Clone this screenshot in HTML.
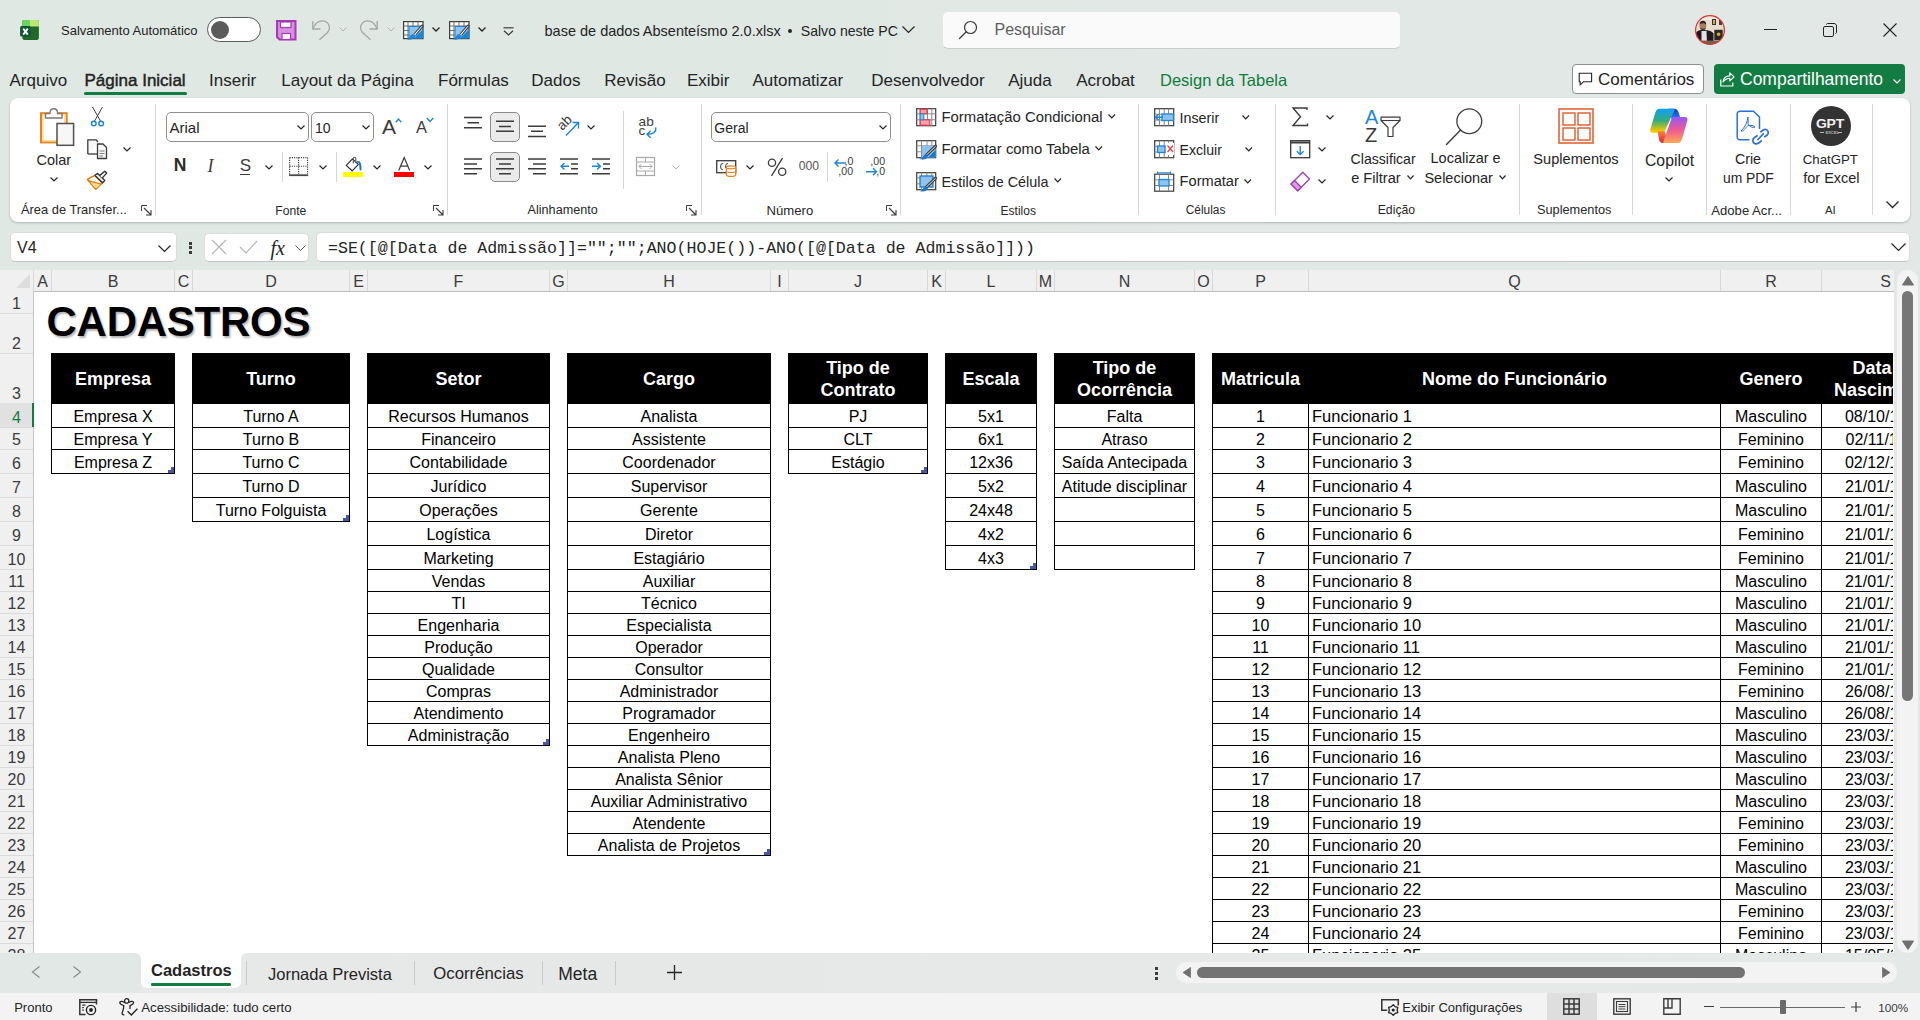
<!DOCTYPE html><html><head><meta charset="utf-8"><style>
html,body{margin:0;padding:0;width:1920px;height:1020px;overflow:hidden;background:linear-gradient(to right,#dfe8e3 0%,#e0e8e4 45%,#e3e8e7 100%);font-family:"Liberation Sans",sans-serif;}
.t{position:absolute;white-space:nowrap;line-height:1;}
svg{overflow:visible}
</style></head><body>
<svg style="position:absolute;left:20px;top:20px;" width="20" height="20" viewBox="0 0 20 20">
<rect x="2.3" y="0" width="16.6" height="19.9" rx="1.8" fill="#21692b"/>
<path d="M4.1 0 H10 V6.5 H2.3 V1.8 A1.8 1.8 0 0 1 4.1 0 Z" fill="#6dd35f"/>
<path d="M10 0 H17.1 A1.8 1.8 0 0 1 18.9 1.8 V6.5 H10 Z" fill="#bce872"/>
<rect x="0.1" y="5.9" width="10.5" height="10.7" rx="1.5" fill="#0f5533"/>
<path d="M3.2 8.6 L7.8 14.6 M7.8 8.6 L3.2 14.6" stroke="#fff" stroke-width="1.9"/>
</svg>
<div class="t" style="left:61px;top:24.00px;font-size:13px;color:#242424;font-weight:400;font-family:'Liberation Sans', sans-serif;">Salvamento Automático</div>
<div style="position:absolute;left:207px;top:17px;width:54px;height:25px;box-sizing:border-box;border:1px solid #5a5a5a;border-radius:13px;background:#fff"></div>
<div style="position:absolute;left:211px;top:21px;width:18px;height:18px;border-radius:50%;background:#5b5b5b"></div>
<svg style="position:absolute;left:276px;top:19.5px;" width="21" height="21" viewBox="0 0 21 21">
<path d="M1 1 H19.5 V19.5 H3.5 L1 17 Z" fill="#d590de" stroke="#a938b6" stroke-width="2" stroke-linejoin="miter"/>
<rect x="4.5" y="2" width="10.5" height="5.5" fill="#fff" stroke="#a938b6" stroke-width="1.2"/>
<rect x="6" y="13.5" width="8.5" height="6" fill="#fff" stroke="#a938b6" stroke-width="1.2"/>
</svg>
<svg style="position:absolute;left:311px;top:20px;" width="20" height="21" viewBox="0 0 20 21"><path d="M1.8 1 V9 H9.5" fill="none" stroke="#a6a6a6" stroke-width="1.3"/><path d="M2.2 8.6 C4 3.5 7.5 0.8 11.5 0.8 C15.5 0.8 18.5 4 18.5 7.8 C18.5 9.8 17.5 11.2 16.5 12.5 L8.5 19.8" fill="none" stroke="#a6a6a6" stroke-width="1.3"/></svg>
<svg style="position:absolute;left:338.5px;top:27px;" width="8" height="5" viewBox="0 0 8 5"><path d="M0.5 0.5 L4 4 L7.5 0.5" fill="none" stroke="#b5b5b5" stroke-width="1"/></svg>
<svg style="position:absolute;left:359px;top:20px;" width="20" height="21" viewBox="0 0 20 21"><path d="M18.2 1 V9 H10.5" fill="none" stroke="#a6a6a6" stroke-width="1.3"/><path d="M17.8 8.6 C16 3.5 12.5 0.8 8.5 0.8 C4.5 0.8 1.5 4 1.5 7.8 C1.5 9.8 2.5 11.2 3.5 12.5 L11.5 19.8" fill="none" stroke="#a6a6a6" stroke-width="1.3"/></svg>
<svg style="position:absolute;left:386.5px;top:27px;" width="8" height="5" viewBox="0 0 8 5"><path d="M0.5 0.5 L4 4 L7.5 0.5" fill="none" stroke="#b5b5b5" stroke-width="1"/></svg>
<svg style="position:absolute;left:403px;top:21px;" width="21" height="19" viewBox="0 0 21 19">
<rect x="0.6" y="0.6" width="19.4" height="17" fill="#fff" stroke="#3b3b3b" stroke-width="1.2"/>
<path d="M0.6 5 H20 M0.6 9.5 H6.5 M0.6 14 H6.5 M5 0.6 V17.6 M10 0.6 V5 M15 0.6 V5" stroke="#6b6b6b" stroke-width="1"/>
<rect x="6" y="5.5" width="13.5" height="11.6" fill="#8ec3f0"/>
<path d="M19.5 9 V17.1 H11 Z" fill="#1e86d6"/>
<path d="M6 5.5 H19.5 V17.1 H6 Z" fill="none" stroke="#1e86d6" stroke-width="1"/>
<path d="M11 13 L18.5 4.5 C19.3 3.7 20.6 4.8 19.8 5.7 L12.5 14.5" fill="#fff" stroke="#3b3b3b" stroke-width="1.1"/>
<path d="M4 18.5 C5.5 18.5 6.5 15.5 8.5 13.5 C10 12.2 12.5 13.5 12 15.5 C11 18.5 7 19 4 18.5 Z" fill="#1e86d6"/>
</svg>
<svg style="position:absolute;left:431.5px;top:27px;" width="8" height="5" viewBox="0 0 8 5"><path d="M0.5 0.5 L4 4 L7.5 0.5" fill="none" stroke="#242424" stroke-width="1.3"/></svg>
<svg style="position:absolute;left:449px;top:21px;" width="21" height="19" viewBox="0 0 21 19">
<rect x="0.6" y="0.6" width="19.4" height="17" fill="#fff" stroke="#3b3b3b" stroke-width="1.2"/>
<path d="M0.6 5 H20 M0.6 9.5 H6.5 M0.6 14 H6.5 M5 0.6 V17.6 M10 0.6 V5 M15 0.6 V5" stroke="#6b6b6b" stroke-width="1"/>
<rect x="6" y="5.5" width="13.5" height="11.6" fill="#8ec3f0"/>
<path d="M19.5 9 V17.1 H11 Z" fill="#1e86d6"/>
<path d="M6 5.5 H19.5 V17.1 H6 Z" fill="none" stroke="#1e86d6" stroke-width="1"/>
<path d="M11 13 L18.5 4.5 C19.3 3.7 20.6 4.8 19.8 5.7 L12.5 14.5" fill="#fff" stroke="#3b3b3b" stroke-width="1.1"/>
<path d="M4 18.5 C5.5 18.5 6.5 15.5 8.5 13.5 C10 12.2 12.5 13.5 12 15.5 C11 18.5 7 19 4 18.5 Z" fill="#1e86d6"/>
</svg>
<svg style="position:absolute;left:477.5px;top:27px;" width="8" height="5" viewBox="0 0 8 5"><path d="M0.5 0.5 L4 4 L7.5 0.5" fill="none" stroke="#242424" stroke-width="1.3"/></svg>
<svg style="position:absolute;left:503px;top:26.5px;" width="11" height="9" viewBox="0 0 11 9"><path d="M0.5 0.8 H10.5" stroke="#3b3b3b" stroke-width="1.2"/><path d="M1 3.8 L5.5 8 L10 3.8" fill="none" stroke="#3b3b3b" stroke-width="1.2"/></svg>
<div class="t" style="left:544.5px;top:23.73px;font-size:14.5px;color:#242424;font-weight:400;font-family:'Liberation Sans', sans-serif;">base de dados Absenteísmo 2.0.xlsx</div>
<div style="position:absolute;left:787.5px;top:28.5px;width:4px;height:4px;background:#242424;border-radius:50%"></div>
<div class="t" style="left:800.75px;top:24.06px;font-size:14.1px;color:#242424;font-weight:400;font-family:'Liberation Sans', sans-serif;">Salvo neste PC</div>
<svg style="position:absolute;left:902px;top:26px;" width="13" height="8" viewBox="0 0 13 8"><path d="M0.5 0.5 L6.5 6.5 L12.5 0.5" fill="none" stroke="#242424" stroke-width="1.2"/></svg>
<div style="position:absolute;left:942px;top:11px;width:459px;height:38px;box-sizing:border-box;background:#fafafa;border:1px solid #e3e6e4;border-bottom:1px solid #c9cccb;border-radius:6px"></div>
<svg style="position:absolute;left:958px;top:20px;" width="20" height="20" viewBox="0 0 20 20"><circle cx="12.5" cy="7.5" r="6" fill="none" stroke="#3b3b3b" stroke-width="1.2"/><path d="M8.3 11.7 L1.5 18.5" stroke="#3b3b3b" stroke-width="1.3" stroke-linecap="round"/></svg>
<div class="t" style="left:994.5px;top:21.96px;font-size:16px;color:#5f5f5f;font-weight:400;font-family:'Liberation Sans', sans-serif;">Pesquisar</div>
<svg style="position:absolute;left:1695px;top:15px;" width="30" height="30" viewBox="0 0 30 30">
<defs><clipPath id="avc"><circle cx="15" cy="15" r="14.6"/></clipPath></defs>
<g clip-path="url(#avc)">
<rect x="0" y="0" width="30" height="30" fill="#e6ddd0"/>
<rect x="0" y="0" width="30" height="5" fill="#f2ede4"/>
<rect x="17" y="4" width="4" height="6" fill="#3b342c"/><rect x="18" y="5" width="2" height="4" fill="#c7a660"/>
<rect x="24" y="5" width="3" height="5" fill="#4a4036"/>
<path d="M1 30 V18 C2 15.5 5 15 7.9 15 C12 15 16.5 15.5 18.5 18.5 V30 Z" fill="#1b1a1c"/>
<path d="M6.5 16 H11.5 L12 30 H6.5 Z" fill="#e9dfe6"/>
<ellipse cx="7.9" cy="11.3" rx="3.3" ry="3.9" fill="#a97c5c"/>
<path d="M4.6 10 C4.5 6.8 6 5.8 7.9 5.8 C10 5.8 11.3 7 11.2 10 C10.5 8.5 9 8.2 7.9 8.2 C6.5 8.2 5.2 8.8 4.6 10 Z" fill="#2a1f1a"/>
<path d="M5 13 C5.5 15.5 10.5 15.5 11 13 C10 14 6 14 5 13 Z" fill="#3a2a22"/>
<rect x="19.3" y="14.8" width="8.4" height="10.4" fill="#2a2622"/>
<circle cx="23.6" cy="19.3" r="1.8" fill="#d4aa3a"/>
<rect x="0" y="25.6" width="30" height="5" fill="#7a6048"/>
</g>
<circle cx="15" cy="15" r="14.4" fill="none" stroke="#e0302a" stroke-width="1.2"/>
</svg>
<div style="position:absolute;left:1764px;top:29px;width:13px;height:1px;background:#242424"></div>
<svg style="position:absolute;left:1823px;top:23px;" width="14" height="14" viewBox="0 0 14 14"><rect x="0.5" y="3.5" width="10" height="10" rx="1.5" fill="none" stroke="#242424" stroke-width="1"/><path d="M3.5 1.5 C3.5 0.9 4 0.5 4.5 0.5 H11 C12.4 0.5 13.5 1.6 13.5 3 V9.5 C13.5 10 13.1 10.5 12.5 10.5" fill="none" stroke="#242424" stroke-width="1"/></svg>
<svg style="position:absolute;left:1883px;top:23px;" width="14" height="14" viewBox="0 0 14 14"><path d="M0.5 0.5 L13.5 13.5 M13.5 0.5 L0.5 13.5" stroke="#242424" stroke-width="1.1"/></svg>
<div class="t" style="left:9.5px;top:71.61px;font-size:17px;color:#242424;font-weight:400;font-family:'Liberation Sans', sans-serif;">Arquivo</div>
<div class="t" style="left:84.5px;top:71.61px;font-size:17px;color:#242424;font-weight:400;font-family:'Liberation Sans', sans-serif;-webkit-text-stroke:0.45px #242424;">Página Inicial</div>
<div class="t" style="left:209px;top:71.61px;font-size:17px;color:#242424;font-weight:400;font-family:'Liberation Sans', sans-serif;">Inserir</div>
<div class="t" style="left:281.25px;top:71.61px;font-size:17px;color:#242424;font-weight:400;font-family:'Liberation Sans', sans-serif;">Layout da Página</div>
<div class="t" style="left:438px;top:71.61px;font-size:17px;color:#242424;font-weight:400;font-family:'Liberation Sans', sans-serif;">Fórmulas</div>
<div class="t" style="left:531.25px;top:71.61px;font-size:17px;color:#242424;font-weight:400;font-family:'Liberation Sans', sans-serif;">Dados</div>
<div class="t" style="left:604.25px;top:71.61px;font-size:17px;color:#242424;font-weight:400;font-family:'Liberation Sans', sans-serif;">Revisão</div>
<div class="t" style="left:687px;top:71.61px;font-size:17px;color:#242424;font-weight:400;font-family:'Liberation Sans', sans-serif;">Exibir</div>
<div class="t" style="left:752.5px;top:71.61px;font-size:17px;color:#242424;font-weight:400;font-family:'Liberation Sans', sans-serif;">Automatizar</div>
<div class="t" style="left:871.25px;top:71.61px;font-size:17px;color:#242424;font-weight:400;font-family:'Liberation Sans', sans-serif;">Desenvolvedor</div>
<div class="t" style="left:1008.25px;top:71.61px;font-size:17px;color:#242424;font-weight:400;font-family:'Liberation Sans', sans-serif;">Ajuda</div>
<div class="t" style="left:1076.25px;top:71.61px;font-size:17px;color:#242424;font-weight:400;font-family:'Liberation Sans', sans-serif;">Acrobat</div>
<div class="t" style="left:1160px;top:72.03px;font-size:16.5px;color:#107c41;font-weight:400;font-family:'Liberation Sans', sans-serif;">Design da Tabela</div>
<div style="position:absolute;left:84px;top:92px;width:103px;height:3px;background:#107c41;border-radius:2px"></div>
<div style="position:absolute;left:1572px;top:64px;width:132px;height:30px;box-sizing:border-box;border:1px solid #8f8f8f;border-radius:4px;background:#fff"></div>
<svg style="position:absolute;left:1578px;top:72px;" width="15" height="14" viewBox="0 0 15 14"><path d="M1.2 1.2 H13.6 V9.8 H5.5 L2.2 12.8 V9.8 H1.2 Z" fill="none" stroke="#242424" stroke-width="1.1" stroke-linejoin="miter"/></svg>
<div class="t" style="left:1598px;top:71.11px;font-size:17px;color:#242424;font-weight:400;font-family:'Liberation Sans', sans-serif;">Comentários</div>
<div style="position:absolute;left:1714px;top:64px;width:191px;height:30px;border-radius:4px;background:#137c43"></div>
<svg style="position:absolute;left:1720px;top:71px;" width="15" height="16" viewBox="0 0 15 16"><path d="M0.8 8.5 V15 H12.8 V11.5" fill="none" stroke="#fff" stroke-width="1.2"/><path d="M3 11 C3.5 6.5 6.5 4.8 9.8 4.8 V1.8 L14 5.8 L9.8 9.8 V7.2 C7.2 7.2 5 8.5 3 11 Z" fill="none" stroke="#fff" stroke-width="1.15" stroke-linejoin="round"/></svg>
<div class="t" style="left:1740px;top:70.69px;font-size:17.5px;color:#fff;font-weight:400;font-family:'Liberation Sans', sans-serif;">Compartilhamento</div>
<svg style="position:absolute;left:1893px;top:79px;" width="8" height="5" viewBox="0 0 8 5"><path d="M0.5 0.5 L4 4 L7.5 0.5" fill="none" stroke="#fff" stroke-width="1.2"/></svg>
<div style="position:absolute;left:10px;top:97.5px;width:1900px;height:124.5px;background:#fff;border-radius:8px;box-shadow:0 1px 2.5px rgba(0,0,0,0.22)"></div>
<svg style="position:absolute;left:40px;top:108px;" width="35" height="39" viewBox="0 0 35 39">
<rect x="1" y="5.2" width="25.7" height="29.2" fill="#fff" stroke="#e8821e" stroke-width="2"/>
<rect x="2.8" y="7" width="22.1" height="25.6" fill="#fff" stroke="#f9dc8c" stroke-width="1.5"/>
<path d="M5.5 10 V5.5 H10 C10 2 11.5 0.8 13.8 0.8 C16.1 0.8 17.6 2 17.6 5.5 H22 V10 Z" fill="#fff" stroke="#7a7a7a" stroke-width="1.4" stroke-linejoin="round"/>
<rect x="17" y="15.5" width="16.6" height="21.8" fill="#f7f7f7" stroke="#505050" stroke-width="1.5"/>
</svg>
<div class="t" style="left:36.5px;top:153.33px;font-size:14.5px;color:#242424;font-weight:400;font-family:'Liberation Sans', sans-serif;">Colar</div>
<svg style="position:absolute;left:50px;top:177.1px;" width="8" height="4.4" viewBox="0 0 8 4.4"><path d="M0.5 0.5 L4.0 3.9 L7.5 0.5" fill="none" stroke="#242424" stroke-width="1.2"/></svg>
<svg style="position:absolute;left:90px;top:106px;" width="15" height="22" viewBox="0 0 15 22">
<path d="M2.5 1 L10.5 15 M12.5 1 L4.5 15" stroke="#3b3b3b" stroke-width="1"/>
<circle cx="3.8" cy="17.5" r="2.3" fill="#fff" stroke="#1e86d6" stroke-width="1.5"/>
<circle cx="11.2" cy="17.5" r="2.3" fill="#fff" stroke="#1e86d6" stroke-width="1.5"/>
</svg>
<svg style="position:absolute;left:87px;top:139px;" width="21" height="21" viewBox="0 0 21 21">
<path d="M0.8 15 V0.8 H9 L11 3" fill="#f7f7f7" stroke="#3b3b3b" stroke-width="1.3" stroke-linejoin="round"/>
<path d="M10.5 5 H16 L19.5 8.5 V19.5 H10.5 Z" fill="#f7f7f7" stroke="#3b3b3b" stroke-width="1.3" stroke-linejoin="round"/>
<path d="M0.8 15 H10.5" stroke="#3b3b3b" stroke-width="1.3"/>
<path d="M12.5 12 H17.5 M12.5 14.5 H17.5 M12.5 17 H16" stroke="#6b6b6b" stroke-width="0.9"/>
</svg>
<svg style="position:absolute;left:123px;top:147.4px;" width="8" height="4.4" viewBox="0 0 8 4.4"><path d="M0.5 0.5 L4.0 3.9 L7.5 0.5" fill="none" stroke="#242424" stroke-width="1.2"/></svg>
<svg style="position:absolute;left:86px;top:170px;" width="22" height="21" viewBox="0 0 22 21">
<path d="M1.5 9.45 Q5 6.8 8.9 5.6 L16.3 13 L9.7 19.3 Z" fill="#fff" stroke="#e07a10" stroke-width="1.5" stroke-linejoin="round"/>
<path d="M4.2 12.2 L14.6 14.6 L9.8 18.4 Z" fill="#f9df8a"/>
<path d="M2.6 10.8 L15.2 14.1" stroke="#e07a10" stroke-width="1.3"/>
<path d="M8.9 5.3 L11.6 3.4 L18.8 10.5 L16.6 12.7 Z" fill="#fff" stroke="#333" stroke-width="1.4" stroke-linejoin="round"/>
<path d="M13.8 5.4 L18.8 1.2 L20.7 3.1 L16.3 7.9" fill="#fff" stroke="#333" stroke-width="1.4" stroke-linejoin="round"/>
</svg>
<div class="t" style="left:21px;top:203.90px;font-size:12.875px;color:#262626;font-weight:400;font-family:'Liberation Sans', sans-serif;">Área de Transfer...</div>
<svg style="position:absolute;left:140.5px;top:204.5px;" width="11" height="11" viewBox="0 0 11 11"><path d="M0.5 6 V0.5 H6" fill="none" stroke="#3b3b3b" stroke-width="1"/><path d="M3 3 L10 10 M10 5 V10 H5" fill="none" stroke="#3b3b3b" stroke-width="1.1"/></svg>
<div style="position:absolute;left:155px;top:104px;width:1px;height:111px;background:#d6d6d6"></div>
<div style="position:absolute;left:166px;top:112px;width:143px;height:30px;box-sizing:border-box;border:1px solid #8f8f8f;border-radius:5px;background:#fff"></div>
<div class="t" style="left:169.5px;top:120.30px;font-size:15px;color:#242424;font-weight:400;font-family:'Liberation Sans', sans-serif;">Arial</div>
<svg style="position:absolute;left:297px;top:124.6px;" width="8" height="4.4" viewBox="0 0 8 4.4"><path d="M0.5 0.5 L4.0 3.9 L7.5 0.5" fill="none" stroke="#242424" stroke-width="1.2"/></svg>
<div style="position:absolute;left:311px;top:112px;width:63px;height:30px;box-sizing:border-box;border:1px solid #8f8f8f;border-radius:5px;background:#fff"></div>
<div class="t" style="left:315px;top:121.15px;font-size:14px;color:#242424;font-weight:400;font-family:'Liberation Sans', sans-serif;">10</div>
<svg style="position:absolute;left:362px;top:124.6px;" width="8" height="4.4" viewBox="0 0 8 4.4"><path d="M0.5 0.5 L4.0 3.9 L7.5 0.5" fill="none" stroke="#242424" stroke-width="1.2"/></svg>
<div class="t" style="left:382px;top:116.42px;font-size:21px;color:#3b3b3b;font-weight:400;font-family:'Liberation Sans', sans-serif;">A</div>
<svg style="position:absolute;left:394.5px;top:117.5px;" width="8" height="6" viewBox="0 0 8 6"><path d="M0.8 4.2 L3.5 1 L6.3 4.2" fill="none" stroke="#1e86d6" stroke-width="1.4"/></svg>
<div class="t" style="left:416px;top:119.23px;font-size:16.5px;color:#3b3b3b;font-weight:400;font-family:'Liberation Sans', sans-serif;">A</div>
<svg style="position:absolute;left:426px;top:117px;" width="9" height="6" viewBox="0 0 9 6"><path d="M0.8 1 L4 4.5 L7.3 1" fill="none" stroke="#1e86d6" stroke-width="1.4"/></svg>
<div class="t" style="left:173.8px;top:156.99px;font-size:17.5px;color:#2b2b2b;font-weight:700;font-family:'Liberation Sans', sans-serif;">N</div>
<div class="t" style="left:207.5px;top:156.56px;font-size:18px;color:#3b3b3b;font-weight:400;font-family:'Liberation Serif', serif;font-style:italic">I</div>
<div class="t" style="left:239.8px;top:157.41px;font-size:17px;color:#3b3b3b;font-weight:400;font-family:'Liberation Sans', sans-serif;">S</div>
<div style="position:absolute;left:240px;top:173.5px;width:10px;height:1.5px;background:#3b3b3b"></div>
<svg style="position:absolute;left:264.5px;top:165.1px;" width="8" height="4.4" viewBox="0 0 8 4.4"><path d="M0.5 0.5 L4.0 3.9 L7.5 0.5" fill="none" stroke="#242424" stroke-width="1.2"/></svg>
<div style="position:absolute;left:281.5px;top:152px;width:1px;height:30px;background:#d6d6d6"></div>
<svg style="position:absolute;left:289px;top:157px;" width="20" height="20" viewBox="0 0 20 20">
<path d="M0.6 0.6 H18.6 M0.6 9.3 H18.6 M0.6 0.6 V17 M9.6 0.6 V17 M18.6 0.6 V17" fill="none" stroke="#3b3b3b" stroke-width="1.1" stroke-dasharray="1.1 1.15"/>
<path d="M0 18.2 H19.2" stroke="#4a4a4a" stroke-width="1.8"/>
</svg>
<svg style="position:absolute;left:319px;top:165.1px;" width="8" height="4.4" viewBox="0 0 8 4.4"><path d="M0.5 0.5 L4.0 3.9 L7.5 0.5" fill="none" stroke="#242424" stroke-width="1.2"/></svg>
<div style="position:absolute;left:335.5px;top:152px;width:1px;height:30px;background:#d6d6d6"></div>
<svg style="position:absolute;left:343px;top:156px;" width="21" height="16" viewBox="0 0 21 16">
<path d="M3.25 9.4 L9.1 14.8 L15.3 8.6 L9.5 2.9 Z" fill="#fff" stroke="#2b2b2b" stroke-width="1.2" stroke-linejoin="round"/>
<path d="M10.3 7.5 V2.5 C10.3 0.9 12.8 0.9 12.8 2.5 V7" fill="none" stroke="#555" stroke-width="1.1"/>
<path d="M14.8 5.9 C16.6 5.6 17.5 7.5 17.5 13.5" fill="none" stroke="#1e6fc8" stroke-width="1.9" stroke-linecap="round"/>
</svg>
<div style="position:absolute;left:343px;top:172.2px;width:20px;height:5px;background:#ffff00"></div>
<svg style="position:absolute;left:373px;top:165.1px;" width="8" height="4.4" viewBox="0 0 8 4.4"><path d="M0.5 0.5 L4.0 3.9 L7.5 0.5" fill="none" stroke="#242424" stroke-width="1.2"/></svg>
<svg style="position:absolute;left:398px;top:157px;" width="13" height="14" viewBox="0 0 13 14"><path d="M0.7 13.4 L6.2 0.6 L11.7 13.4 M2.6 9 H9.8" fill="none" stroke="#3b3b3b" stroke-width="1.25"/></svg>
<div style="position:absolute;left:394px;top:172.2px;width:20px;height:5px;background:#ff0000"></div>
<svg style="position:absolute;left:423.5px;top:165.1px;" width="8" height="4.4" viewBox="0 0 8 4.4"><path d="M0.5 0.5 L4.0 3.9 L7.5 0.5" fill="none" stroke="#242424" stroke-width="1.2"/></svg>
<div class="t" style="left:275.3px;top:204.54px;font-size:12.125px;color:#262626;font-weight:400;font-family:'Liberation Sans', sans-serif;">Fonte</div>
<svg style="position:absolute;left:432.5px;top:204.5px;" width="11" height="11" viewBox="0 0 11 11"><path d="M0.5 6 V0.5 H6" fill="none" stroke="#3b3b3b" stroke-width="1"/><path d="M3 3 L10 10 M10 5 V10 H5" fill="none" stroke="#3b3b3b" stroke-width="1.1"/></svg>
<div style="position:absolute;left:447px;top:104px;width:1px;height:111px;background:#d6d6d6"></div>
<div style="position:absolute;left:490px;top:112px;width:30px;height:30px;box-sizing:border-box;border:1px solid #8a8a8a;border-radius:5px;background:#ebebeb"></div>
<div style="position:absolute;left:490px;top:152px;width:30px;height:30px;box-sizing:border-box;border:1px solid #8a8a8a;border-radius:5px;background:#ebebeb"></div>
<svg style="position:absolute;left:0;top:0" width="1920" height="230"><path d="M464 117.6 H482 M467.5 122.8 H479 M464 127.8 H482" stroke="#3b3b3b" stroke-width="1.5"/><path d="M496 121.3 H514 M499 126.4 H511 M496 131.2 H514" stroke="#3b3b3b" stroke-width="1.5"/><path d="M528 126.2 H546 M531 131.2 H543 M528 136.6 H546" stroke="#3b3b3b" stroke-width="1.5"/><path d="M464 158.9 H482 M464 163.9 H477 M464 168.7 H482 M464 173.8 H477" stroke="#3b3b3b" stroke-width="1.5"/><path d="M496 158.9 H514 M499 163.9 H511 M496 168.7 H514 M499 173.8 H511" stroke="#3b3b3b" stroke-width="1.5"/><path d="M528 158.9 H546 M533 163.9 H546 M528 168.7 H546 M533 173.8 H546" stroke="#3b3b3b" stroke-width="1.5"/><path d="M560 158.9 H578 M571 163.9 H578 M571 168.7 H578 M560 173.8 H578" stroke="#3b3b3b" stroke-width="1.5"/><path d="M592 158.9 H610 M603 163.9 H610 M603 168.7 H610 M592 173.8 H610" stroke="#3b3b3b" stroke-width="1.5"/><path d="M569 166.3 H561.5 M564.5 163 L561 166.3 L564.5 169.6" fill="none" stroke="#1e86d6" stroke-width="1.4"/><path d="M592 166.3 H600 M597 163 L600.5 166.3 L597 169.6" fill="none" stroke="#1e86d6" stroke-width="1.4"/><path d="M566 135.5 L578.5 122.5 M572.5 122.5 H578.5 V128.5" fill="none" stroke="#1e86d6" stroke-width="1.4"/><rect x="636.5" y="157.5" width="18" height="18" fill="none" stroke="#a8a8a8" stroke-width="1.2"/><path d="M636.5 162 H654.5 M636.5 171 H654.5 M645.5 157.5 V162 M645.5 171 V175.5" stroke="#a8a8a8" stroke-width="1"/><path d="M639 166.5 H652 M641.5 164 L639 166.5 L641.5 169 M649.5 164 L652 166.5 L649.5 169" fill="none" stroke="#a8a8a8" stroke-width="1"/><path d="M655.6 127.3 C656.6 132 653.5 134.3 647.2 134.3 M650.6 130.8 L647 134.3 L650.6 137.8" fill="none" stroke="#1e86d6" stroke-width="1.4"/></svg>
<div class="t" style="left:557px;top:116px;font-size:13.5px;color:#3b3b3b;transform:rotate(-45deg);transform-origin:50% 50%;">ab</div>
<svg style="position:absolute;left:587px;top:125.39999999999999px;" width="8" height="4.4" viewBox="0 0 8 4.4"><path d="M0.5 0.5 L4.0 3.9 L7.5 0.5" fill="none" stroke="#242424" stroke-width="1.2"/></svg>
<div style="position:absolute;left:623px;top:111px;width:1px;height:78px;background:#d6d6d6"></div>
<div class="t" style="left:638.6px;top:114.79px;font-size:13.6px;color:#3b3b3b;font-weight:400;font-family:'Liberation Sans', sans-serif;">ab</div>
<div class="t" style="left:638.6px;top:124.29px;font-size:13.6px;color:#3b3b3b;font-weight:400;font-family:'Liberation Sans', sans-serif;">c</div>
<svg style="position:absolute;left:672px;top:165.4px;" width="8" height="4.4" viewBox="0 0 8 4.4"><path d="M0.5 0.5 L4.0 3.9 L7.5 0.5" fill="none" stroke="#a8a8a8" stroke-width="1"/></svg>
<div class="t" style="left:527.6px;top:204.11px;font-size:12.625px;color:#262626;font-weight:400;font-family:'Liberation Sans', sans-serif;">Alinhamento</div>
<svg style="position:absolute;left:686px;top:204.5px;" width="11" height="11" viewBox="0 0 11 11"><path d="M0.5 6 V0.5 H6" fill="none" stroke="#3b3b3b" stroke-width="1"/><path d="M3 3 L10 10 M10 5 V10 H5" fill="none" stroke="#3b3b3b" stroke-width="1.1"/></svg>
<div style="position:absolute;left:700.5px;top:104px;width:1px;height:111px;background:#d6d6d6"></div>
<div style="position:absolute;left:711px;top:112px;width:180px;height:30px;box-sizing:border-box;border:1px solid #8f8f8f;border-radius:5px;background:#fff"></div>
<div class="t" style="left:714.3px;top:121.15px;font-size:14px;color:#242424;font-weight:400;font-family:'Liberation Sans', sans-serif;">Geral</div>
<svg style="position:absolute;left:879px;top:124.6px;" width="8" height="4.4" viewBox="0 0 8 4.4"><path d="M0.5 0.5 L4.0 3.9 L7.5 0.5" fill="none" stroke="#242424" stroke-width="1.2"/></svg>
<svg style="position:absolute;left:716px;top:160px;" width="21" height="18" viewBox="0 0 21 18">
<rect x="0.7" y="0.7" width="19" height="12" fill="#fff" stroke="#3b3b3b" stroke-width="1.3"/>
<path d="M7 3.5 C3.8 3.2 3.8 10 7 9.7 M12 3.5 C9.5 3.3 9.3 7 9.5 8" fill="none" stroke="#555" stroke-width="1.1"/>
<path d="M10.3 7.3 C10.3 5.3 19.7 5.3 19.7 7.3 V14.8 C19.7 17 10.3 17 10.3 14.8 Z" fill="#fff" stroke="#e8821e" stroke-width="1.3"/>
<path d="M10.3 7.3 C10.3 9.3 19.7 9.3 19.7 7.3 M10.3 11 C10.3 13 19.7 13 19.7 11" fill="none" stroke="#e8821e" stroke-width="1.2"/>
</svg>
<svg style="position:absolute;left:746px;top:165.1px;" width="8" height="4.4" viewBox="0 0 8 4.4"><path d="M0.5 0.5 L4.0 3.9 L7.5 0.5" fill="none" stroke="#242424" stroke-width="1.2"/></svg>
<svg style="position:absolute;left:767px;top:157px;" width="20" height="20" viewBox="0 0 20 20"><circle cx="5" cy="5.7" r="3.6" fill="none" stroke="#3b3b3b" stroke-width="1.3"/><circle cx="15.2" cy="14.8" r="3.6" fill="none" stroke="#3b3b3b" stroke-width="1.3"/><path d="M15.5 1.2 L4.5 18.8" stroke="#3b3b3b" stroke-width="1.3"/></svg>
<div class="t" style="left:798.8px;top:160.47px;font-size:12.2px;color:#555;font-weight:400;font-family:'Liberation Sans', sans-serif;">000</div>
<div style="position:absolute;left:826.5px;top:152px;width:1px;height:30px;background:#d6d6d6"></div>
<div class="t" style="left:844.5px;top:156.23px;font-size:10.6px;color:#3b3b3b;font-weight:400;font-family:'Liberation Sans', sans-serif;">,0</div>
<div class="t" style="left:838.3px;top:166.43px;font-size:10.6px;color:#3b3b3b;font-weight:400;font-family:'Liberation Sans', sans-serif;">,00</div>
<svg style="position:absolute;left:0;top:0" width="1920" height="230"><path d="M846 163 H835 M838.5 159.5 L835 163 L838.5 166.5" fill="none" stroke="#1e86d6" stroke-width="1.4"/><path d="M866 171.8 H876.5 M873 168.3 L876.5 171.8 L873 175.3" fill="none" stroke="#1e86d6" stroke-width="1.4"/></svg>
<div class="t" style="left:870.3px;top:156.23px;font-size:10.6px;color:#3b3b3b;font-weight:400;font-family:'Liberation Sans', sans-serif;">,00</div>
<div class="t" style="left:876.3px;top:166.43px;font-size:10.6px;color:#3b3b3b;font-weight:400;font-family:'Liberation Sans', sans-serif;">,0</div>
<div class="t" style="left:766.6px;top:203.69px;font-size:13.125px;color:#262626;font-weight:400;font-family:'Liberation Sans', sans-serif;">Número</div>
<svg style="position:absolute;left:886px;top:204.5px;" width="11" height="11" viewBox="0 0 11 11"><path d="M0.5 6 V0.5 H6" fill="none" stroke="#3b3b3b" stroke-width="1"/><path d="M3 3 L10 10 M10 5 V10 H5" fill="none" stroke="#3b3b3b" stroke-width="1.1"/></svg>
<div style="position:absolute;left:900px;top:104px;width:1px;height:111px;background:#d6d6d6"></div>
<svg style="position:absolute;left:916px;top:108px;" width="21" height="19" viewBox="0 0 21 19">
<rect x="0.7" y="0.7" width="19" height="17" fill="#fff" stroke="#3b3b3b" stroke-width="1.2"/>
<path d="M0.7 5.8 H19.7 M0.7 11.8 H19.7 M4 0.7 V17.7 M11.5 0.7 V17.7 M15.8 0.7 V17.7" stroke="#8a8a8a" stroke-width="1"/>
<rect x="4.2" y="1.2" width="6.8" height="4.6" fill="#f8a3ad" stroke="#e8303e" stroke-width="1.1"/>
<rect x="4.2" y="11.8" width="9.6" height="5.4" fill="#f8a3ad" stroke="#e8303e" stroke-width="1.1"/>
<rect x="4.2" y="5.8" width="3.6" height="6" fill="#8ec3f0" stroke="#1e86d6" stroke-width="1"/>
</svg>
<svg style="position:absolute;left:916px;top:140px;" width="21" height="20" viewBox="0 0 21 20">
<rect x="0.7" y="0.7" width="19" height="17" fill="#fff" stroke="#3b3b3b" stroke-width="1.2"/>
<path d="M0.7 5.8 H19.7 M0.7 11.8 H5 M5.5 0.7 V17.7 M11 0.7 V5.8 M15.8 0.7 V5.8" stroke="#8a8a8a" stroke-width="1"/>
<path d="M6 5.8 H19.5 V17.5 H6 Z" fill="#8ec3f0"/><path d="M19.5 10 V17.5 H12 Z" fill="#1e78d0"/>
<path d="M19.6 6.2 L10.2 15.3" stroke="#3b3b3b" stroke-width="3" stroke-linecap="round"/>
<path d="M19.3 6.5 L10.5 15" stroke="#fff" stroke-width="0.9" stroke-linecap="round"/>
<path d="M3.2 19 C5 19 6.5 17.8 7.4 16 C8.3 14.3 10.3 14 11.4 15.2 C12.5 16.6 11.2 18.6 8.6 19.2 C6.6 19.6 4.5 19.5 3.2 19 Z" fill="#1e78d0"/>
</svg>
<svg style="position:absolute;left:916px;top:172px;" width="21" height="20" viewBox="0 0 21 20">
<rect x="0.7" y="0.7" width="19" height="17" fill="#fff" stroke="#3b3b3b" stroke-width="1.2"/>
<path d="M0.7 5.8 H19.7 M0.7 11.8 H5 M5.5 0.7 V17.7 M11 0.7 V5.8 M15.8 0.7 V5.8" stroke="#8a8a8a" stroke-width="1"/>
<rect x="4" y="4" width="13" height="11" fill="#8ec3f0" stroke="#1e78d0" stroke-width="1.3"/>
<path d="M19.6 6.2 L10.2 15.3" stroke="#3b3b3b" stroke-width="3" stroke-linecap="round"/>
<path d="M19.3 6.5 L10.5 15" stroke="#fff" stroke-width="0.9" stroke-linecap="round"/>
<path d="M3.2 19 C5 19 6.5 17.8 7.4 16 C8.3 14.3 10.3 14 11.4 15.2 C12.5 16.6 11.2 18.6 8.6 19.2 C6.6 19.6 4.5 19.5 3.2 19 Z" fill="#1e78d0"/>
</svg>
<div class="t" style="left:941.5px;top:110.41px;font-size:14.875px;color:#242424;font-weight:400;font-family:'Liberation Sans', sans-serif;">Formatação Condicional</div>
<svg style="position:absolute;left:1108px;top:113.89999999999999px;" width="7.5" height="4.4" viewBox="0 0 7.5 4.4"><path d="M0.5 0.5 L3.75 3.9 L7.0 0.5" fill="none" stroke="#242424" stroke-width="1.2"/></svg>
<div class="t" style="left:941.5px;top:142.31px;font-size:14.875px;color:#242424;font-weight:400;font-family:'Liberation Sans', sans-serif;">Formatar como Tabela</div>
<svg style="position:absolute;left:1095px;top:146.4px;" width="7.5" height="4.4" viewBox="0 0 7.5 4.4"><path d="M0.5 0.5 L3.75 3.9 L7.0 0.5" fill="none" stroke="#242424" stroke-width="1.2"/></svg>
<div class="t" style="left:941.5px;top:174.58px;font-size:14.375px;color:#242424;font-weight:400;font-family:'Liberation Sans', sans-serif;">Estilos de Célula</div>
<svg style="position:absolute;left:1054px;top:178.2px;" width="7.5" height="4.4" viewBox="0 0 7.5 4.4"><path d="M0.5 0.5 L3.75 3.9 L7.0 0.5" fill="none" stroke="#242424" stroke-width="1.2"/></svg>
<div class="t" style="left:1000.6px;top:204.64px;font-size:12.0px;color:#262626;font-weight:400;font-family:'Liberation Sans', sans-serif;">Estilos</div>
<div style="position:absolute;left:1138px;top:104px;width:1px;height:111px;background:#d6d6d6"></div>
<svg style="position:absolute;left:1154px;top:108px;" width="21" height="19" viewBox="0 0 21 19"><rect x="0.7" y="0.7" width="19" height="17" fill="#fff" stroke="#3b3b3b" stroke-width="1.2"/>
<path d="M0.7 6.3 H19.7 M0.7 12 H19.7 M5.5 0.7 V17.7 M10.2 0.7 V17.7 M14.5 0.7 V17.7" stroke="#7b7b7b" stroke-width="0.9"/><rect x="8" y="6" width="11.5" height="6.5" fill="#8ec3f0" stroke="#1e86d6" stroke-width="1.3"/><path d="M9 9.2 H1.5 M4.5 6.2 L1.5 9.2 L4.5 12.2" fill="none" stroke="#1e86d6" stroke-width="1.4"/></svg>
<svg style="position:absolute;left:1154px;top:140px;" width="21" height="19" viewBox="0 0 21 19"><rect x="0.7" y="0.7" width="19" height="17" fill="#fff" stroke="#3b3b3b" stroke-width="1.2"/>
<path d="M0.7 6.3 H19.7 M0.7 12 H19.7 M5.5 0.7 V17.7 M10.2 0.7 V17.7 M14.5 0.7 V17.7" stroke="#7b7b7b" stroke-width="0.9"/><rect x="3.5" y="6" width="7.5" height="6.5" fill="#8ec3f0" stroke="#1e86d6" stroke-width="1.3"/><rect x="12" y="3" width="8" height="12" fill="#fff"/><path d="M13.5 5.5 L19 12 M19 5.5 L13.5 12" stroke="#e8424d" stroke-width="1.3"/></svg>
<svg style="position:absolute;left:1154px;top:171px;" width="21" height="21" viewBox="0 0 21 21"><rect x="0.7" y="3.2" width="19" height="17" fill="#fff" stroke="#3b3b3b" stroke-width="1.2"/><path d="M0.7 8.8 H19.7 M0.7 14.5 H19.7 M5.5 3.2 V20.2 M14.5 3.2 V20.2" stroke="#7b7b7b" stroke-width="0.9"/><rect x="5" y="8.5" width="10" height="6.5" fill="#8ec3f0" stroke="#1e86d6" stroke-width="1.3"/><path d="M3.5 0.5 V3 M16.5 0.5 V3 M3.5 1.8 H16.5" stroke="#1e86d6" stroke-width="1.1"/></svg>
<div class="t" style="left:1179.6px;top:110.84px;font-size:14.25px;color:#242424;font-weight:400;font-family:'Liberation Sans', sans-serif;">Inserir</div>
<svg style="position:absolute;left:1242px;top:115.0px;" width="7.5" height="4.4" viewBox="0 0 7.5 4.4"><path d="M0.5 0.5 L3.75 3.9 L7.0 0.5" fill="none" stroke="#242424" stroke-width="1.2"/></svg>
<div class="t" style="left:1179.6px;top:142.64px;font-size:14.125px;color:#242424;font-weight:400;font-family:'Liberation Sans', sans-serif;">Excluir</div>
<svg style="position:absolute;left:1245px;top:147.1px;" width="7.5" height="4.4" viewBox="0 0 7.5 4.4"><path d="M0.5 0.5 L3.75 3.9 L7.0 0.5" fill="none" stroke="#242424" stroke-width="1.2"/></svg>
<div class="t" style="left:1179.6px;top:174.22px;font-size:14.625px;color:#242424;font-weight:400;font-family:'Liberation Sans', sans-serif;">Formatar</div>
<svg style="position:absolute;left:1244px;top:178.6px;" width="7.5" height="4.4" viewBox="0 0 7.5 4.4"><path d="M0.5 0.5 L3.75 3.9 L7.0 0.5" fill="none" stroke="#242424" stroke-width="1.2"/></svg>
<div class="t" style="left:1185.8px;top:204.75px;font-size:11.875px;color:#262626;font-weight:400;font-family:'Liberation Sans', sans-serif;">Células</div>
<div style="position:absolute;left:1274.5px;top:104px;width:1px;height:111px;background:#d6d6d6"></div>
<svg style="position:absolute;left:1291px;top:107px;" width="18" height="20" viewBox="0 0 18 20"><path d="M16 3 V1 H2 L9.5 9.8 L2 18.5 H16.5 V16.5" fill="none" stroke="#3b3b3b" stroke-width="1.4" stroke-linejoin="miter"/></svg>
<svg style="position:absolute;left:1326px;top:114.89999999999999px;" width="8" height="4.4" viewBox="0 0 8 4.4"><path d="M0.5 0.5 L4.0 3.9 L7.5 0.5" fill="none" stroke="#242424" stroke-width="1.2"/></svg>
<svg style="position:absolute;left:1290px;top:140px;" width="21" height="19" viewBox="0 0 21 19"><rect x="0.7" y="0.7" width="19" height="17" fill="#fff" stroke="#3b3b3b" stroke-width="1.3"/><path d="M0.7 2.5 H19.7" stroke="#3b3b3b" stroke-width="2"/><path d="M10.2 6 V14.5 M6.8 11.2 L10.2 14.6 L13.6 11.2" fill="none" stroke="#1e86d6" stroke-width="1.4"/></svg>
<svg style="position:absolute;left:1318px;top:147.0px;" width="8" height="4.4" viewBox="0 0 8 4.4"><path d="M0.5 0.5 L4.0 3.9 L7.5 0.5" fill="none" stroke="#242424" stroke-width="1.2"/></svg>
<svg style="position:absolute;left:1290px;top:171px;" width="21" height="20" viewBox="0 0 21 20"><path d="M1 13 L12.8 1.2 L19.5 8 L7.8 19.8 Z" fill="#fff" stroke="#a33bb3" stroke-width="1.3" stroke-linejoin="round"/><path d="M1 13 L4.5 9.5 L11.2 16.3 L7.8 19.8 Z" fill="#d9a0e0" stroke="#a33bb3" stroke-width="1.3" stroke-linejoin="round"/></svg>
<svg style="position:absolute;left:1318px;top:178.9px;" width="8" height="4.4" viewBox="0 0 8 4.4"><path d="M0.5 0.5 L4.0 3.9 L7.5 0.5" fill="none" stroke="#242424" stroke-width="1.2"/></svg>
<div class="t" style="left:1365px;top:107.47px;font-size:20px;color:#1e86d6;font-weight:400;font-family:'Liberation Sans', sans-serif;">A</div>
<div class="t" style="left:1365px;top:125.07px;font-size:20px;color:#3b3b3b;font-weight:400;font-family:'Liberation Sans', sans-serif;">Z</div>
<svg style="position:absolute;left:1380px;top:116px;" width="22" height="22" viewBox="0 0 22 22"><path d="M1 1.2 H20 V4.5 L13 11.5 V20.5 H8 V11.5 L1 4.5 Z" fill="#fff" stroke="#3b3b3b" stroke-width="1.2" stroke-linejoin="round"/><path d="M1 4.5 H20" stroke="#3b3b3b" stroke-width="1.1"/></svg>
<div class="t" style="left:1350.6px;top:151.74px;font-size:14.125px;color:#242424;font-weight:400;font-family:'Liberation Sans', sans-serif;">Classificar</div>
<div class="t" style="left:1351.2px;top:171.22px;font-size:14.625px;color:#242424;font-weight:400;font-family:'Liberation Sans', sans-serif;">e Filtrar</div>
<svg style="position:absolute;left:1407px;top:175.1px;" width="7" height="4.4" viewBox="0 0 7 4.4"><path d="M0.5 0.5 L3.5 3.9 L6.5 0.5" fill="none" stroke="#242424" stroke-width="1.2"/></svg>
<svg style="position:absolute;left:1444px;top:107px;" width="40" height="40" viewBox="0 0 40 40"><circle cx="25.3" cy="14.3" r="12.4" fill="#fff" stroke="#3b3b3b" stroke-width="1.3"/><path d="M16.6 23 L2.5 37.5" stroke="#3b3b3b" stroke-width="1.4" stroke-linecap="round"/></svg>
<div class="t" style="left:1430.5px;top:151.43px;font-size:14.5px;color:#242424;font-weight:400;font-family:'Liberation Sans', sans-serif;">Localizar e</div>
<div class="t" style="left:1424.4px;top:171.33px;font-size:14.5px;color:#242424;font-weight:400;font-family:'Liberation Sans', sans-serif;">Selecionar</div>
<svg style="position:absolute;left:1499px;top:175.1px;" width="7" height="4.4" viewBox="0 0 7 4.4"><path d="M0.5 0.5 L3.5 3.9 L6.5 0.5" fill="none" stroke="#242424" stroke-width="1.2"/></svg>
<div class="t" style="left:1377.7px;top:204.43px;font-size:12.25px;color:#262626;font-weight:400;font-family:'Liberation Sans', sans-serif;">Edição</div>
<div style="position:absolute;left:1519.2px;top:104px;width:1px;height:111px;background:#d6d6d6"></div>
<svg style="position:absolute;left:1558px;top:108px;" width="36" height="36" viewBox="0 0 36 36"><rect x="1" y="1" width="34" height="34" fill="none" stroke="#e05a2b" stroke-width="1.5"/><rect x="5" y="5" width="12" height="12" fill="none" stroke="#e05a2b" stroke-width="1.4"/><rect x="20" y="5" width="12" height="12" fill="none" stroke="#e05a2b" stroke-width="1.4"/><rect x="5" y="20" width="12" height="12" fill="none" stroke="#e05a2b" stroke-width="1.4"/><rect x="20" y="20" width="12" height="12" fill="none" stroke="#e05a2b" stroke-width="1.4"/></svg>
<div class="t" style="left:1533.3px;top:151.52px;font-size:14.625px;color:#242424;font-weight:400;font-family:'Liberation Sans', sans-serif;">Suplementos</div>
<div class="t" style="left:1537px;top:204.01px;font-size:12.75px;color:#262626;font-weight:400;font-family:'Liberation Sans', sans-serif;">Suplementos</div>
<div style="position:absolute;left:1631.7px;top:104px;width:1px;height:111px;background:#d6d6d6"></div>
<svg style="position:absolute;left:1650px;top:108px;" width="38" height="36" viewBox="0 0 38 36">
<defs>
<linearGradient id="cpA" x1="0" y1="0" x2="0" y2="1"><stop offset="0" stop-color="#12a0f2"/><stop offset="0.5" stop-color="#35ac7a"/><stop offset="0.95" stop-color="#f4c800"/></linearGradient>
<linearGradient id="cpB" x1="0" y1="0" x2="0" y2="1"><stop offset="0" stop-color="#9d55ef"/><stop offset="0.5" stop-color="#ee5a92"/><stop offset="1" stop-color="#fca456"/></linearGradient>
<linearGradient id="cpC" x1="0" y1="0" x2="0" y2="1"><stop offset="0" stop-color="#0b3fcc"/><stop offset="1" stop-color="#2c78ef"/></linearGradient>
<linearGradient id="cpD" x1="0" y1="0" x2="0" y2="1"><stop offset="0" stop-color="#fb7a3c"/><stop offset="1" stop-color="#d5303e"/></linearGradient>
</defs>
<path d="M18.5 1.5 H24.5 C26.5 1.5 27.3 3 28 5 L29.5 9.8 H22 Z" fill="url(#cpC)" stroke="url(#cpC)" stroke-width="1.5" stroke-linejoin="round"/>
<path d="M9.5 1.5 H24 L13.5 24 H2.5 C1.2 24 0.6 23 1 21.5 L6 5 C6.8 2.5 7.8 1.5 9.5 1.5 Z" fill="url(#cpA)" stroke="url(#cpA)" stroke-width="1.5" stroke-linejoin="round"/>
<path d="M8.5 24 H14 L18 34.3 H12.5 C10.8 34.3 10.2 33 9.6 31 Z" fill="url(#cpD)" stroke="url(#cpD)" stroke-width="1.5" stroke-linejoin="round"/>
<path d="M22.5 9.8 H35 C36.5 9.8 37 11 36.6 12.5 L31.5 30 C30.8 32.5 29.8 34.3 28 34.3 H14 Z" fill="url(#cpB)" stroke="url(#cpB)" stroke-width="1.5" stroke-linejoin="round"/>
</svg>
<div class="t" style="left:1645px;top:152.57px;font-size:15.75px;color:#242424;font-weight:400;font-family:'Liberation Sans', sans-serif;">Copilot</div>
<svg style="position:absolute;left:1664.5px;top:176.79999999999998px;" width="8" height="4.4" viewBox="0 0 8 4.4"><path d="M0.5 0.5 L4.0 3.9 L7.5 0.5" fill="none" stroke="#242424" stroke-width="1.2"/></svg>
<div style="position:absolute;left:1706.2px;top:104px;width:1px;height:111px;background:#d6d6d6"></div>
<svg style="position:absolute;left:1736px;top:110px;" width="34" height="37" viewBox="0 0 34 37">
<path d="M13.5 29.8 H4 C2.3 29.8 1.2 28.7 1.2 27 V4 C1.2 2.3 2.3 1.2 4 1.2 H17.5 L23.5 7 V19" fill="none" stroke="#2a6fdb" stroke-width="1.5" stroke-linejoin="round"/>
<path d="M12 7 C11.5 12 8.5 18 5 21 C7 22 10 17.5 12 15.5 C14.5 15 18 15.5 19 17 C17 18.5 13 16 12 14 C12 12 12.5 9 12 7 Z" fill="none" stroke="#2a6fdb" stroke-width="1"/>
<path transform="translate(0.3,2.2)" d="M24.5 19.5 L27.5 17.5 C29.5 16.5 32 18 32 20.5 C32 21.5 31.5 22.2 30.8 22.8 L28.5 24.5 M20.8 23.5 L18 25.5 C16 26.8 16 29.8 18 31 C19.5 32 21 31.8 22.3 30.8 L25 28.8 M21.5 27.5 L27 21.5" fill="none" stroke="#2a6fdb" stroke-width="1.7" stroke-linecap="round"/>
</svg>
<div class="t" style="left:1734.9px;top:151.84px;font-size:14.25px;color:#242424;font-weight:400;font-family:'Liberation Sans', sans-serif;">Crie</div>
<div class="t" style="left:1723px;top:171.85px;font-size:13.875px;color:#242424;font-weight:400;font-family:'Liberation Sans', sans-serif;">um PDF</div>
<div class="t" style="left:1711.3px;top:203.69px;font-size:13.125px;color:#262626;font-weight:400;font-family:'Liberation Sans', sans-serif;">Adobe Acr...</div>
<div style="position:absolute;left:1789.5px;top:104px;width:1px;height:111px;background:#d6d6d6"></div>
<div style="position:absolute;left:1811px;top:106px;width:40px;height:40px;border-radius:50%;background:#333"></div>
<div class="t" style="left:1816px;top:116.35px;font-size:14px;color:#f2f2f2;font-weight:700;font-family:'Liberation Sans', sans-serif;letter-spacing:-0.3px;transform:scaleY(0.95)">GPT</div>
<div style="position:absolute;left:1820px;top:132px;width:4px;height:1px;background:#bbb"></div>
<div style="position:absolute;left:1838px;top:132px;width:4px;height:1px;background:#bbb"></div>
<div class="t" style="left:1825.5px;top:131.11px;font-size:4px;color:#bbb;font-weight:700;font-family:'Liberation Sans', sans-serif;">EXCEL</div>
<div class="t" style="left:1802.7px;top:152.68px;font-size:13.25px;color:#242424;font-weight:400;font-family:'Liberation Sans', sans-serif;">ChatGPT</div>
<div class="t" style="left:1803.2px;top:171.33px;font-size:14.5px;color:#242424;font-weight:400;font-family:'Liberation Sans', sans-serif;">for Excel</div>
<div class="t" style="left:1825px;top:205.17px;font-size:11.375px;color:#262626;font-weight:400;font-family:'Liberation Sans', sans-serif;">AI</div>
<div style="position:absolute;left:1872px;top:104px;width:1px;height:111px;background:#d6d6d6"></div>
<svg style="position:absolute;left:1886px;top:201px;" width="13" height="8" viewBox="0 0 13 8"><path d="M0.5 0.5 L6.5 6.5 L12.5 0.5" fill="none" stroke="#242424" stroke-width="1.3"/></svg>
<div style="position:absolute;left:10px;top:232px;width:167px;height:30px;box-sizing:border-box;background:#fff;border:1px solid #dcdcdc;border-bottom-color:#c4c4c4;border-radius:5px"></div>
<div class="t" style="left:17px;top:239.56px;font-size:16px;color:#242424;font-weight:400;font-family:'Liberation Sans', sans-serif;">V4</div>
<svg style="position:absolute;left:158px;top:245px;" width="13" height="8" viewBox="0 0 13 8"><path d="M0.5 0.5 L6.5 6.5 L12.5 0.5" fill="none" stroke="#242424" stroke-width="1.2"/></svg>
<div style="position:absolute;left:188.8px;top:241.5px;width:3.4px;height:3.4px;background:#3b3b3b"></div>
<div style="position:absolute;left:188.8px;top:246px;width:3.4px;height:3.4px;background:#3b3b3b"></div>
<div style="position:absolute;left:188.8px;top:250.5px;width:3.4px;height:3.4px;background:#3b3b3b"></div>
<div style="position:absolute;left:204px;top:232.5px;width:105px;height:29px;box-sizing:border-box;background:#fff;border:1px solid #dcdcdc;border-bottom-color:#c4c4c4;border-radius:5px"></div>
<svg style="position:absolute;left:211px;top:239px;" width="16" height="16" viewBox="0 0 16 16"><path d="M1 1 L15 15 M15 1 L1 15" stroke="#b5b5b5" stroke-width="1.2"/></svg>
<svg style="position:absolute;left:239px;top:240px;" width="19" height="14" viewBox="0 0 19 14"><path d="M1 7 L7 13 L18 1" fill="none" stroke="#b5b5b5" stroke-width="1.2"/></svg>
<div class="t" style="left:270.5px;top:238.07px;font-size:20px;color:#242424;font-weight:400;font-family:'Liberation Serif', serif;font-style:italic">fx</div>
<svg style="position:absolute;left:295px;top:245px;" width="11" height="7" viewBox="0 0 11 7"><path d="M0.5 0.5 L5.5 5.5 L10.5 0.5" fill="none" stroke="#555" stroke-width="1"/></svg>
<div style="position:absolute;left:316px;top:232px;width:1594px;height:30px;box-sizing:border-box;background:#fff;border:1px solid #dcdcdc;border-bottom-color:#c4c4c4;border-radius:5px"></div>
<div class="t" style="left:328px;top:240.75px;font-size:16.6px;color:#242424;font-weight:400;font-family:'Liberation Mono', monospace;">=SE([@[Data de Admissão]]=&quot;&quot;;&quot;&quot;;ANO(HOJE())-ANO([@[Data de Admissão]]))</div>
<svg style="position:absolute;left:1891px;top:243px;" width="15" height="9" viewBox="0 0 15 9"><path d="M0.5 0.5 L7.5 7.5 L14.5 0.5" fill="none" stroke="#242424" stroke-width="1.2"/></svg>
<div style="position:absolute;left:34px;top:291px;width:1860px;height:662px;background:#fff"></div>
<div style="position:absolute;left:0px;top:262px;width:1920px;height:8px;background:transparent"></div>
<div style="position:absolute;left:0px;top:270px;width:1894px;height:21px;background:#f0f0f0"></div>
<div style="position:absolute;left:0px;top:291px;width:1894px;height:1px;background:#bfbfbf"></div>
<div style="position:absolute;left:0px;top:291px;width:33px;height:662px;background:#f0f0f0"></div>
<div style="position:absolute;left:33px;top:270px;width:1px;height:21px;background:#d9d9d9"></div>
<div style="position:absolute;left:33px;top:291px;width:1px;height:662px;background:#c6c6c6"></div>
<svg style="position:absolute;left:14px;top:273px;" width="18" height="16" viewBox="0 0 18 16"><path d="M16 1 L16 15 L2 15 Z" fill="#dcdcdc"/></svg>
<div style="position:absolute;left:51px;top:270px;width:1px;height:21px;background:#d9d9d9"></div>
<div class="t" style="left:12.5px;width:60px;text-align:center;top:274.46px;font-size:16px;color:#3b3b3b;font-weight:400;font-family:'Liberation Sans', sans-serif;">A</div>
<div style="position:absolute;left:174px;top:270px;width:1px;height:21px;background:#d9d9d9"></div>
<div class="t" style="left:83.0px;width:60px;text-align:center;top:274.46px;font-size:16px;color:#3b3b3b;font-weight:400;font-family:'Liberation Sans', sans-serif;">B</div>
<div style="position:absolute;left:192px;top:270px;width:1px;height:21px;background:#d9d9d9"></div>
<div class="t" style="left:153.5px;width:60px;text-align:center;top:274.46px;font-size:16px;color:#3b3b3b;font-weight:400;font-family:'Liberation Sans', sans-serif;">C</div>
<div style="position:absolute;left:349px;top:270px;width:1px;height:21px;background:#d9d9d9"></div>
<div class="t" style="left:241.0px;width:60px;text-align:center;top:274.46px;font-size:16px;color:#3b3b3b;font-weight:400;font-family:'Liberation Sans', sans-serif;">D</div>
<div style="position:absolute;left:367px;top:270px;width:1px;height:21px;background:#d9d9d9"></div>
<div class="t" style="left:328.5px;width:60px;text-align:center;top:274.46px;font-size:16px;color:#3b3b3b;font-weight:400;font-family:'Liberation Sans', sans-serif;">E</div>
<div style="position:absolute;left:549px;top:270px;width:1px;height:21px;background:#d9d9d9"></div>
<div class="t" style="left:428.5px;width:60px;text-align:center;top:274.46px;font-size:16px;color:#3b3b3b;font-weight:400;font-family:'Liberation Sans', sans-serif;">F</div>
<div style="position:absolute;left:567px;top:270px;width:1px;height:21px;background:#d9d9d9"></div>
<div class="t" style="left:528.5px;width:60px;text-align:center;top:274.46px;font-size:16px;color:#3b3b3b;font-weight:400;font-family:'Liberation Sans', sans-serif;">G</div>
<div style="position:absolute;left:770px;top:270px;width:1px;height:21px;background:#d9d9d9"></div>
<div class="t" style="left:639.0px;width:60px;text-align:center;top:274.46px;font-size:16px;color:#3b3b3b;font-weight:400;font-family:'Liberation Sans', sans-serif;">H</div>
<div style="position:absolute;left:788px;top:270px;width:1px;height:21px;background:#d9d9d9"></div>
<div class="t" style="left:749.5px;width:60px;text-align:center;top:274.46px;font-size:16px;color:#3b3b3b;font-weight:400;font-family:'Liberation Sans', sans-serif;">I</div>
<div style="position:absolute;left:927px;top:270px;width:1px;height:21px;background:#d9d9d9"></div>
<div class="t" style="left:828.0px;width:60px;text-align:center;top:274.46px;font-size:16px;color:#3b3b3b;font-weight:400;font-family:'Liberation Sans', sans-serif;">J</div>
<div style="position:absolute;left:945px;top:270px;width:1px;height:21px;background:#d9d9d9"></div>
<div class="t" style="left:906.5px;width:60px;text-align:center;top:274.46px;font-size:16px;color:#3b3b3b;font-weight:400;font-family:'Liberation Sans', sans-serif;">K</div>
<div style="position:absolute;left:1036px;top:270px;width:1px;height:21px;background:#d9d9d9"></div>
<div class="t" style="left:961.0px;width:60px;text-align:center;top:274.46px;font-size:16px;color:#3b3b3b;font-weight:400;font-family:'Liberation Sans', sans-serif;">L</div>
<div style="position:absolute;left:1054px;top:270px;width:1px;height:21px;background:#d9d9d9"></div>
<div class="t" style="left:1015.5px;width:60px;text-align:center;top:274.46px;font-size:16px;color:#3b3b3b;font-weight:400;font-family:'Liberation Sans', sans-serif;">M</div>
<div style="position:absolute;left:1194px;top:270px;width:1px;height:21px;background:#d9d9d9"></div>
<div class="t" style="left:1094.5px;width:60px;text-align:center;top:274.46px;font-size:16px;color:#3b3b3b;font-weight:400;font-family:'Liberation Sans', sans-serif;">N</div>
<div style="position:absolute;left:1212px;top:270px;width:1px;height:21px;background:#d9d9d9"></div>
<div class="t" style="left:1173.5px;width:60px;text-align:center;top:274.46px;font-size:16px;color:#3b3b3b;font-weight:400;font-family:'Liberation Sans', sans-serif;">O</div>
<div style="position:absolute;left:1308px;top:270px;width:1px;height:21px;background:#d9d9d9"></div>
<div class="t" style="left:1230.5px;width:60px;text-align:center;top:274.46px;font-size:16px;color:#3b3b3b;font-weight:400;font-family:'Liberation Sans', sans-serif;">P</div>
<div style="position:absolute;left:1720px;top:270px;width:1px;height:21px;background:#d9d9d9"></div>
<div class="t" style="left:1484.5px;width:60px;text-align:center;top:274.46px;font-size:16px;color:#3b3b3b;font-weight:400;font-family:'Liberation Sans', sans-serif;">Q</div>
<div style="position:absolute;left:1821px;top:270px;width:1px;height:21px;background:#d9d9d9"></div>
<div class="t" style="left:1741.0px;width:60px;text-align:center;top:274.46px;font-size:16px;color:#3b3b3b;font-weight:400;font-family:'Liberation Sans', sans-serif;">R</div>
<div class="t" style="left:1855.5px;width:60px;text-align:center;top:274.46px;font-size:16px;color:#3b3b3b;font-weight:400;font-family:'Liberation Sans', sans-serif;">S</div>
<div style="position:absolute;left:0px;top:313px;width:33px;height:1px;background:#dadada"></div>
<div class="t" style="left:-3.5px;width:40px;text-align:center;top:296.26px;font-size:16px;color:#3b3b3b;font-weight:400;font-family:'Liberation Sans', sans-serif;">1</div>
<div style="position:absolute;left:0px;top:353px;width:33px;height:1px;background:#dadada"></div>
<div class="t" style="left:-3.5px;width:40px;text-align:center;top:336.26px;font-size:16px;color:#3b3b3b;font-weight:400;font-family:'Liberation Sans', sans-serif;">2</div>
<div style="position:absolute;left:0px;top:403px;width:33px;height:1px;background:#dadada"></div>
<div class="t" style="left:-3.5px;width:40px;text-align:center;top:386.26px;font-size:16px;color:#3b3b3b;font-weight:400;font-family:'Liberation Sans', sans-serif;">3</div>
<div style="position:absolute;left:0px;top:427px;width:33px;height:1px;background:#dadada"></div>
<div style="position:absolute;left:0px;top:403px;width:33px;height:24px;background:#e1e1e1"></div>
<div style="position:absolute;left:32px;top:403px;width:2px;height:24px;background:#107c41"></div>
<div class="t" style="left:-3.5px;width:40px;text-align:center;top:410.26px;font-size:16px;color:#107c41;font-weight:400;font-family:'Liberation Sans', sans-serif;">4</div>
<div style="position:absolute;left:0px;top:449px;width:33px;height:1px;background:#dadada"></div>
<div class="t" style="left:-3.5px;width:40px;text-align:center;top:432.26px;font-size:16px;color:#3b3b3b;font-weight:400;font-family:'Liberation Sans', sans-serif;">5</div>
<div style="position:absolute;left:0px;top:473px;width:33px;height:1px;background:#dadada"></div>
<div class="t" style="left:-3.5px;width:40px;text-align:center;top:456.26px;font-size:16px;color:#3b3b3b;font-weight:400;font-family:'Liberation Sans', sans-serif;">6</div>
<div style="position:absolute;left:0px;top:497px;width:33px;height:1px;background:#dadada"></div>
<div class="t" style="left:-3.5px;width:40px;text-align:center;top:480.26px;font-size:16px;color:#3b3b3b;font-weight:400;font-family:'Liberation Sans', sans-serif;">7</div>
<div style="position:absolute;left:0px;top:521px;width:33px;height:1px;background:#dadada"></div>
<div class="t" style="left:-3.5px;width:40px;text-align:center;top:504.26px;font-size:16px;color:#3b3b3b;font-weight:400;font-family:'Liberation Sans', sans-serif;">8</div>
<div style="position:absolute;left:0px;top:545px;width:33px;height:1px;background:#dadada"></div>
<div class="t" style="left:-3.5px;width:40px;text-align:center;top:528.26px;font-size:16px;color:#3b3b3b;font-weight:400;font-family:'Liberation Sans', sans-serif;">9</div>
<div style="position:absolute;left:0px;top:569px;width:33px;height:1px;background:#dadada"></div>
<div class="t" style="left:-3.5px;width:40px;text-align:center;top:552.26px;font-size:16px;color:#3b3b3b;font-weight:400;font-family:'Liberation Sans', sans-serif;">10</div>
<div style="position:absolute;left:0px;top:591px;width:33px;height:1px;background:#dadada"></div>
<div class="t" style="left:-3.5px;width:40px;text-align:center;top:574.26px;font-size:16px;color:#3b3b3b;font-weight:400;font-family:'Liberation Sans', sans-serif;">11</div>
<div style="position:absolute;left:0px;top:613px;width:33px;height:1px;background:#dadada"></div>
<div class="t" style="left:-3.5px;width:40px;text-align:center;top:596.26px;font-size:16px;color:#3b3b3b;font-weight:400;font-family:'Liberation Sans', sans-serif;">12</div>
<div style="position:absolute;left:0px;top:635px;width:33px;height:1px;background:#dadada"></div>
<div class="t" style="left:-3.5px;width:40px;text-align:center;top:618.26px;font-size:16px;color:#3b3b3b;font-weight:400;font-family:'Liberation Sans', sans-serif;">13</div>
<div style="position:absolute;left:0px;top:657px;width:33px;height:1px;background:#dadada"></div>
<div class="t" style="left:-3.5px;width:40px;text-align:center;top:640.26px;font-size:16px;color:#3b3b3b;font-weight:400;font-family:'Liberation Sans', sans-serif;">14</div>
<div style="position:absolute;left:0px;top:679px;width:33px;height:1px;background:#dadada"></div>
<div class="t" style="left:-3.5px;width:40px;text-align:center;top:662.26px;font-size:16px;color:#3b3b3b;font-weight:400;font-family:'Liberation Sans', sans-serif;">15</div>
<div style="position:absolute;left:0px;top:701px;width:33px;height:1px;background:#dadada"></div>
<div class="t" style="left:-3.5px;width:40px;text-align:center;top:684.26px;font-size:16px;color:#3b3b3b;font-weight:400;font-family:'Liberation Sans', sans-serif;">16</div>
<div style="position:absolute;left:0px;top:723px;width:33px;height:1px;background:#dadada"></div>
<div class="t" style="left:-3.5px;width:40px;text-align:center;top:706.26px;font-size:16px;color:#3b3b3b;font-weight:400;font-family:'Liberation Sans', sans-serif;">17</div>
<div style="position:absolute;left:0px;top:745px;width:33px;height:1px;background:#dadada"></div>
<div class="t" style="left:-3.5px;width:40px;text-align:center;top:728.26px;font-size:16px;color:#3b3b3b;font-weight:400;font-family:'Liberation Sans', sans-serif;">18</div>
<div style="position:absolute;left:0px;top:767px;width:33px;height:1px;background:#dadada"></div>
<div class="t" style="left:-3.5px;width:40px;text-align:center;top:750.26px;font-size:16px;color:#3b3b3b;font-weight:400;font-family:'Liberation Sans', sans-serif;">19</div>
<div style="position:absolute;left:0px;top:789px;width:33px;height:1px;background:#dadada"></div>
<div class="t" style="left:-3.5px;width:40px;text-align:center;top:772.26px;font-size:16px;color:#3b3b3b;font-weight:400;font-family:'Liberation Sans', sans-serif;">20</div>
<div style="position:absolute;left:0px;top:811px;width:33px;height:1px;background:#dadada"></div>
<div class="t" style="left:-3.5px;width:40px;text-align:center;top:794.26px;font-size:16px;color:#3b3b3b;font-weight:400;font-family:'Liberation Sans', sans-serif;">21</div>
<div style="position:absolute;left:0px;top:833px;width:33px;height:1px;background:#dadada"></div>
<div class="t" style="left:-3.5px;width:40px;text-align:center;top:816.26px;font-size:16px;color:#3b3b3b;font-weight:400;font-family:'Liberation Sans', sans-serif;">22</div>
<div style="position:absolute;left:0px;top:855px;width:33px;height:1px;background:#dadada"></div>
<div class="t" style="left:-3.5px;width:40px;text-align:center;top:838.26px;font-size:16px;color:#3b3b3b;font-weight:400;font-family:'Liberation Sans', sans-serif;">23</div>
<div style="position:absolute;left:0px;top:877px;width:33px;height:1px;background:#dadada"></div>
<div class="t" style="left:-3.5px;width:40px;text-align:center;top:860.26px;font-size:16px;color:#3b3b3b;font-weight:400;font-family:'Liberation Sans', sans-serif;">24</div>
<div style="position:absolute;left:0px;top:899px;width:33px;height:1px;background:#dadada"></div>
<div class="t" style="left:-3.5px;width:40px;text-align:center;top:882.26px;font-size:16px;color:#3b3b3b;font-weight:400;font-family:'Liberation Sans', sans-serif;">25</div>
<div style="position:absolute;left:0px;top:921px;width:33px;height:1px;background:#dadada"></div>
<div class="t" style="left:-3.5px;width:40px;text-align:center;top:904.26px;font-size:16px;color:#3b3b3b;font-weight:400;font-family:'Liberation Sans', sans-serif;">26</div>
<div style="position:absolute;left:0px;top:943px;width:33px;height:1px;background:#dadada"></div>
<div class="t" style="left:-3.5px;width:40px;text-align:center;top:926.26px;font-size:16px;color:#3b3b3b;font-weight:400;font-family:'Liberation Sans', sans-serif;">27</div>
<div class="t" style="left:-3.5px;width:40px;text-align:center;top:948.26px;font-size:16px;color:#3b3b3b;font-weight:400;font-family:'Liberation Sans', sans-serif;">28</div>
<div class="t" style="left:46.5px;top:301.15px;font-size:42px;letter-spacing:-0.25px;font-weight:700;color:#000;text-shadow:1.5px 1.5px 2px rgba(0,0,0,0.3)">CADASTROS</div>
<div style="position:absolute;left:51px;top:353px;width:124px;height:51px;background:#000"></div>
<div class="t" style="left:21.5px;width:183px;text-align:center;top:369.56px;font-size:18px;color:#fff;font-weight:700;font-family:'Liberation Sans', sans-serif;">Empresa</div>
<div style="position:absolute;left:51px;top:403px;width:1px;height:71px;background:#000"></div>
<div style="position:absolute;left:174px;top:403px;width:1px;height:71px;background:#000"></div>
<div style="position:absolute;left:51px;top:427px;width:124px;height:1px;background:#000"></div>
<div class="t" style="left:31.5px;width:163px;text-align:center;top:408.86px;font-size:16px;color:#000;font-weight:400;font-family:'Liberation Sans', sans-serif;">Empresa X</div>
<div style="position:absolute;left:51px;top:449px;width:124px;height:1px;background:#000"></div>
<div class="t" style="left:31.5px;width:163px;text-align:center;top:431.86px;font-size:16px;color:#000;font-weight:400;font-family:'Liberation Sans', sans-serif;">Empresa Y</div>
<div style="position:absolute;left:51px;top:473px;width:124px;height:1px;background:#000"></div>
<div class="t" style="left:31.5px;width:163px;text-align:center;top:454.86px;font-size:16px;color:#000;font-weight:400;font-family:'Liberation Sans', sans-serif;">Empresa Z</div>
<svg style="position:absolute;left:168px;top:467px;" width="6" height="6" viewBox="0 0 6 6"><path d="M3 0 H6 V6 H0 V3 H3 Z" fill="#4a55a8"/></svg>
<div style="position:absolute;left:192px;top:353px;width:158px;height:51px;background:#000"></div>
<div class="t" style="left:162.5px;width:217px;text-align:center;top:369.56px;font-size:18px;color:#fff;font-weight:700;font-family:'Liberation Sans', sans-serif;">Turno</div>
<div style="position:absolute;left:192px;top:403px;width:1px;height:119px;background:#000"></div>
<div style="position:absolute;left:349px;top:403px;width:1px;height:119px;background:#000"></div>
<div style="position:absolute;left:192px;top:427px;width:158px;height:1px;background:#000"></div>
<div class="t" style="left:172.5px;width:197px;text-align:center;top:408.86px;font-size:16px;color:#000;font-weight:400;font-family:'Liberation Sans', sans-serif;">Turno A</div>
<div style="position:absolute;left:192px;top:449px;width:158px;height:1px;background:#000"></div>
<div class="t" style="left:172.5px;width:197px;text-align:center;top:431.86px;font-size:16px;color:#000;font-weight:400;font-family:'Liberation Sans', sans-serif;">Turno B</div>
<div style="position:absolute;left:192px;top:473px;width:158px;height:1px;background:#000"></div>
<div class="t" style="left:172.5px;width:197px;text-align:center;top:454.86px;font-size:16px;color:#000;font-weight:400;font-family:'Liberation Sans', sans-serif;">Turno C</div>
<div style="position:absolute;left:192px;top:497px;width:158px;height:1px;background:#000"></div>
<div class="t" style="left:172.5px;width:197px;text-align:center;top:478.86px;font-size:16px;color:#000;font-weight:400;font-family:'Liberation Sans', sans-serif;">Turno D</div>
<div style="position:absolute;left:192px;top:521px;width:158px;height:1px;background:#000"></div>
<div class="t" style="left:172.5px;width:197px;text-align:center;top:502.86px;font-size:16px;color:#000;font-weight:400;font-family:'Liberation Sans', sans-serif;">Turno Folguista</div>
<svg style="position:absolute;left:343px;top:515px;" width="6" height="6" viewBox="0 0 6 6"><path d="M3 0 H6 V6 H0 V3 H3 Z" fill="#4a55a8"/></svg>
<div style="position:absolute;left:367px;top:353px;width:183px;height:51px;background:#000"></div>
<div class="t" style="left:337.5px;width:242px;text-align:center;top:369.56px;font-size:18px;color:#fff;font-weight:700;font-family:'Liberation Sans', sans-serif;">Setor</div>
<div style="position:absolute;left:367px;top:403px;width:1px;height:343px;background:#000"></div>
<div style="position:absolute;left:549px;top:403px;width:1px;height:343px;background:#000"></div>
<div style="position:absolute;left:367px;top:427px;width:183px;height:1px;background:#000"></div>
<div class="t" style="left:347.5px;width:222px;text-align:center;top:408.86px;font-size:16px;color:#000;font-weight:400;font-family:'Liberation Sans', sans-serif;">Recursos Humanos</div>
<div style="position:absolute;left:367px;top:449px;width:183px;height:1px;background:#000"></div>
<div class="t" style="left:347.5px;width:222px;text-align:center;top:431.86px;font-size:16px;color:#000;font-weight:400;font-family:'Liberation Sans', sans-serif;">Financeiro</div>
<div style="position:absolute;left:367px;top:473px;width:183px;height:1px;background:#000"></div>
<div class="t" style="left:347.5px;width:222px;text-align:center;top:454.86px;font-size:16px;color:#000;font-weight:400;font-family:'Liberation Sans', sans-serif;">Contabilidade</div>
<div style="position:absolute;left:367px;top:497px;width:183px;height:1px;background:#000"></div>
<div class="t" style="left:347.5px;width:222px;text-align:center;top:478.86px;font-size:16px;color:#000;font-weight:400;font-family:'Liberation Sans', sans-serif;">Jurídico</div>
<div style="position:absolute;left:367px;top:521px;width:183px;height:1px;background:#000"></div>
<div class="t" style="left:347.5px;width:222px;text-align:center;top:502.86px;font-size:16px;color:#000;font-weight:400;font-family:'Liberation Sans', sans-serif;">Operações</div>
<div style="position:absolute;left:367px;top:545px;width:183px;height:1px;background:#000"></div>
<div class="t" style="left:347.5px;width:222px;text-align:center;top:526.86px;font-size:16px;color:#000;font-weight:400;font-family:'Liberation Sans', sans-serif;">Logística</div>
<div style="position:absolute;left:367px;top:569px;width:183px;height:1px;background:#000"></div>
<div class="t" style="left:347.5px;width:222px;text-align:center;top:550.86px;font-size:16px;color:#000;font-weight:400;font-family:'Liberation Sans', sans-serif;">Marketing</div>
<div style="position:absolute;left:367px;top:591px;width:183px;height:1px;background:#000"></div>
<div class="t" style="left:347.5px;width:222px;text-align:center;top:573.86px;font-size:16px;color:#000;font-weight:400;font-family:'Liberation Sans', sans-serif;">Vendas</div>
<div style="position:absolute;left:367px;top:613px;width:183px;height:1px;background:#000"></div>
<div class="t" style="left:347.5px;width:222px;text-align:center;top:595.86px;font-size:16px;color:#000;font-weight:400;font-family:'Liberation Sans', sans-serif;">TI</div>
<div style="position:absolute;left:367px;top:635px;width:183px;height:1px;background:#000"></div>
<div class="t" style="left:347.5px;width:222px;text-align:center;top:617.86px;font-size:16px;color:#000;font-weight:400;font-family:'Liberation Sans', sans-serif;">Engenharia</div>
<div style="position:absolute;left:367px;top:657px;width:183px;height:1px;background:#000"></div>
<div class="t" style="left:347.5px;width:222px;text-align:center;top:639.86px;font-size:16px;color:#000;font-weight:400;font-family:'Liberation Sans', sans-serif;">Produção</div>
<div style="position:absolute;left:367px;top:679px;width:183px;height:1px;background:#000"></div>
<div class="t" style="left:347.5px;width:222px;text-align:center;top:661.86px;font-size:16px;color:#000;font-weight:400;font-family:'Liberation Sans', sans-serif;">Qualidade</div>
<div style="position:absolute;left:367px;top:701px;width:183px;height:1px;background:#000"></div>
<div class="t" style="left:347.5px;width:222px;text-align:center;top:683.86px;font-size:16px;color:#000;font-weight:400;font-family:'Liberation Sans', sans-serif;">Compras</div>
<div style="position:absolute;left:367px;top:723px;width:183px;height:1px;background:#000"></div>
<div class="t" style="left:347.5px;width:222px;text-align:center;top:705.86px;font-size:16px;color:#000;font-weight:400;font-family:'Liberation Sans', sans-serif;">Atendimento</div>
<div style="position:absolute;left:367px;top:745px;width:183px;height:1px;background:#000"></div>
<div class="t" style="left:347.5px;width:222px;text-align:center;top:727.86px;font-size:16px;color:#000;font-weight:400;font-family:'Liberation Sans', sans-serif;">Administração</div>
<svg style="position:absolute;left:543px;top:739px;" width="6" height="6" viewBox="0 0 6 6"><path d="M3 0 H6 V6 H0 V3 H3 Z" fill="#4a55a8"/></svg>
<div style="position:absolute;left:567px;top:353px;width:204px;height:51px;background:#000"></div>
<div class="t" style="left:537.5px;width:263px;text-align:center;top:369.56px;font-size:18px;color:#fff;font-weight:700;font-family:'Liberation Sans', sans-serif;">Cargo</div>
<div style="position:absolute;left:567px;top:403px;width:1px;height:453px;background:#000"></div>
<div style="position:absolute;left:770px;top:403px;width:1px;height:453px;background:#000"></div>
<div style="position:absolute;left:567px;top:427px;width:204px;height:1px;background:#000"></div>
<div class="t" style="left:547.5px;width:243px;text-align:center;top:408.86px;font-size:16px;color:#000;font-weight:400;font-family:'Liberation Sans', sans-serif;">Analista</div>
<div style="position:absolute;left:567px;top:449px;width:204px;height:1px;background:#000"></div>
<div class="t" style="left:547.5px;width:243px;text-align:center;top:431.86px;font-size:16px;color:#000;font-weight:400;font-family:'Liberation Sans', sans-serif;">Assistente</div>
<div style="position:absolute;left:567px;top:473px;width:204px;height:1px;background:#000"></div>
<div class="t" style="left:547.5px;width:243px;text-align:center;top:454.86px;font-size:16px;color:#000;font-weight:400;font-family:'Liberation Sans', sans-serif;">Coordenador</div>
<div style="position:absolute;left:567px;top:497px;width:204px;height:1px;background:#000"></div>
<div class="t" style="left:547.5px;width:243px;text-align:center;top:478.86px;font-size:16px;color:#000;font-weight:400;font-family:'Liberation Sans', sans-serif;">Supervisor</div>
<div style="position:absolute;left:567px;top:521px;width:204px;height:1px;background:#000"></div>
<div class="t" style="left:547.5px;width:243px;text-align:center;top:502.86px;font-size:16px;color:#000;font-weight:400;font-family:'Liberation Sans', sans-serif;">Gerente</div>
<div style="position:absolute;left:567px;top:545px;width:204px;height:1px;background:#000"></div>
<div class="t" style="left:547.5px;width:243px;text-align:center;top:526.86px;font-size:16px;color:#000;font-weight:400;font-family:'Liberation Sans', sans-serif;">Diretor</div>
<div style="position:absolute;left:567px;top:569px;width:204px;height:1px;background:#000"></div>
<div class="t" style="left:547.5px;width:243px;text-align:center;top:550.86px;font-size:16px;color:#000;font-weight:400;font-family:'Liberation Sans', sans-serif;">Estagiário</div>
<div style="position:absolute;left:567px;top:591px;width:204px;height:1px;background:#000"></div>
<div class="t" style="left:547.5px;width:243px;text-align:center;top:573.86px;font-size:16px;color:#000;font-weight:400;font-family:'Liberation Sans', sans-serif;">Auxiliar</div>
<div style="position:absolute;left:567px;top:613px;width:204px;height:1px;background:#000"></div>
<div class="t" style="left:547.5px;width:243px;text-align:center;top:595.86px;font-size:16px;color:#000;font-weight:400;font-family:'Liberation Sans', sans-serif;">Técnico</div>
<div style="position:absolute;left:567px;top:635px;width:204px;height:1px;background:#000"></div>
<div class="t" style="left:547.5px;width:243px;text-align:center;top:617.86px;font-size:16px;color:#000;font-weight:400;font-family:'Liberation Sans', sans-serif;">Especialista</div>
<div style="position:absolute;left:567px;top:657px;width:204px;height:1px;background:#000"></div>
<div class="t" style="left:547.5px;width:243px;text-align:center;top:639.86px;font-size:16px;color:#000;font-weight:400;font-family:'Liberation Sans', sans-serif;">Operador</div>
<div style="position:absolute;left:567px;top:679px;width:204px;height:1px;background:#000"></div>
<div class="t" style="left:547.5px;width:243px;text-align:center;top:661.86px;font-size:16px;color:#000;font-weight:400;font-family:'Liberation Sans', sans-serif;">Consultor</div>
<div style="position:absolute;left:567px;top:701px;width:204px;height:1px;background:#000"></div>
<div class="t" style="left:547.5px;width:243px;text-align:center;top:683.86px;font-size:16px;color:#000;font-weight:400;font-family:'Liberation Sans', sans-serif;">Administrador</div>
<div style="position:absolute;left:567px;top:723px;width:204px;height:1px;background:#000"></div>
<div class="t" style="left:547.5px;width:243px;text-align:center;top:705.86px;font-size:16px;color:#000;font-weight:400;font-family:'Liberation Sans', sans-serif;">Programador</div>
<div style="position:absolute;left:567px;top:745px;width:204px;height:1px;background:#000"></div>
<div class="t" style="left:547.5px;width:243px;text-align:center;top:727.86px;font-size:16px;color:#000;font-weight:400;font-family:'Liberation Sans', sans-serif;">Engenheiro</div>
<div style="position:absolute;left:567px;top:767px;width:204px;height:1px;background:#000"></div>
<div class="t" style="left:547.5px;width:243px;text-align:center;top:749.86px;font-size:16px;color:#000;font-weight:400;font-family:'Liberation Sans', sans-serif;">Analista Pleno</div>
<div style="position:absolute;left:567px;top:789px;width:204px;height:1px;background:#000"></div>
<div class="t" style="left:547.5px;width:243px;text-align:center;top:771.86px;font-size:16px;color:#000;font-weight:400;font-family:'Liberation Sans', sans-serif;">Analista Sênior</div>
<div style="position:absolute;left:567px;top:811px;width:204px;height:1px;background:#000"></div>
<div class="t" style="left:547.5px;width:243px;text-align:center;top:793.86px;font-size:16px;color:#000;font-weight:400;font-family:'Liberation Sans', sans-serif;">Auxiliar Administrativo</div>
<div style="position:absolute;left:567px;top:833px;width:204px;height:1px;background:#000"></div>
<div class="t" style="left:547.5px;width:243px;text-align:center;top:815.86px;font-size:16px;color:#000;font-weight:400;font-family:'Liberation Sans', sans-serif;">Atendente</div>
<div style="position:absolute;left:567px;top:855px;width:204px;height:1px;background:#000"></div>
<div class="t" style="left:547.5px;width:243px;text-align:center;top:837.86px;font-size:16px;color:#000;font-weight:400;font-family:'Liberation Sans', sans-serif;">Analista de Projetos</div>
<svg style="position:absolute;left:764px;top:849px;" width="6" height="6" viewBox="0 0 6 6"><path d="M3 0 H6 V6 H0 V3 H3 Z" fill="#4a55a8"/></svg>
<div style="position:absolute;left:788px;top:353px;width:140px;height:51px;background:#000"></div>
<div class="t" style="left:758.5px;width:199px;text-align:center;top:358.96px;font-size:18px;color:#fff;font-weight:700;font-family:'Liberation Sans', sans-serif;">Tipo de</div>
<div class="t" style="left:758.5px;width:199px;text-align:center;top:381.36px;font-size:18px;color:#fff;font-weight:700;font-family:'Liberation Sans', sans-serif;">Contrato</div>
<div style="position:absolute;left:788px;top:403px;width:1px;height:71px;background:#000"></div>
<div style="position:absolute;left:927px;top:403px;width:1px;height:71px;background:#000"></div>
<div style="position:absolute;left:788px;top:427px;width:140px;height:1px;background:#000"></div>
<div class="t" style="left:768.5px;width:179px;text-align:center;top:408.86px;font-size:16px;color:#000;font-weight:400;font-family:'Liberation Sans', sans-serif;">PJ</div>
<div style="position:absolute;left:788px;top:449px;width:140px;height:1px;background:#000"></div>
<div class="t" style="left:768.5px;width:179px;text-align:center;top:431.86px;font-size:16px;color:#000;font-weight:400;font-family:'Liberation Sans', sans-serif;">CLT</div>
<div style="position:absolute;left:788px;top:473px;width:140px;height:1px;background:#000"></div>
<div class="t" style="left:768.5px;width:179px;text-align:center;top:454.86px;font-size:16px;color:#000;font-weight:400;font-family:'Liberation Sans', sans-serif;">Estágio</div>
<svg style="position:absolute;left:921px;top:467px;" width="6" height="6" viewBox="0 0 6 6"><path d="M3 0 H6 V6 H0 V3 H3 Z" fill="#4a55a8"/></svg>
<div style="position:absolute;left:945px;top:353px;width:92px;height:51px;background:#000"></div>
<div class="t" style="left:915.5px;width:151px;text-align:center;top:369.56px;font-size:18px;color:#fff;font-weight:700;font-family:'Liberation Sans', sans-serif;">Escala</div>
<div style="position:absolute;left:945px;top:403px;width:1px;height:167px;background:#000"></div>
<div style="position:absolute;left:1036px;top:403px;width:1px;height:167px;background:#000"></div>
<div style="position:absolute;left:945px;top:427px;width:92px;height:1px;background:#000"></div>
<div class="t" style="left:925.5px;width:131px;text-align:center;top:408.86px;font-size:16px;color:#000;font-weight:400;font-family:'Liberation Sans', sans-serif;">5x1</div>
<div style="position:absolute;left:945px;top:449px;width:92px;height:1px;background:#000"></div>
<div class="t" style="left:925.5px;width:131px;text-align:center;top:431.86px;font-size:16px;color:#000;font-weight:400;font-family:'Liberation Sans', sans-serif;">6x1</div>
<div style="position:absolute;left:945px;top:473px;width:92px;height:1px;background:#000"></div>
<div class="t" style="left:925.5px;width:131px;text-align:center;top:454.86px;font-size:16px;color:#000;font-weight:400;font-family:'Liberation Sans', sans-serif;">12x36</div>
<div style="position:absolute;left:945px;top:497px;width:92px;height:1px;background:#000"></div>
<div class="t" style="left:925.5px;width:131px;text-align:center;top:478.86px;font-size:16px;color:#000;font-weight:400;font-family:'Liberation Sans', sans-serif;">5x2</div>
<div style="position:absolute;left:945px;top:521px;width:92px;height:1px;background:#000"></div>
<div class="t" style="left:925.5px;width:131px;text-align:center;top:502.86px;font-size:16px;color:#000;font-weight:400;font-family:'Liberation Sans', sans-serif;">24x48</div>
<div style="position:absolute;left:945px;top:545px;width:92px;height:1px;background:#000"></div>
<div class="t" style="left:925.5px;width:131px;text-align:center;top:526.86px;font-size:16px;color:#000;font-weight:400;font-family:'Liberation Sans', sans-serif;">4x2</div>
<div style="position:absolute;left:945px;top:569px;width:92px;height:1px;background:#000"></div>
<div class="t" style="left:925.5px;width:131px;text-align:center;top:550.86px;font-size:16px;color:#000;font-weight:400;font-family:'Liberation Sans', sans-serif;">4x3</div>
<svg style="position:absolute;left:1030px;top:563px;" width="6" height="6" viewBox="0 0 6 6"><path d="M3 0 H6 V6 H0 V3 H3 Z" fill="#4a55a8"/></svg>
<div style="position:absolute;left:1054px;top:353px;width:141px;height:51px;background:#000"></div>
<div class="t" style="left:1024.5px;width:200px;text-align:center;top:358.96px;font-size:18px;color:#fff;font-weight:700;font-family:'Liberation Sans', sans-serif;">Tipo de</div>
<div class="t" style="left:1024.5px;width:200px;text-align:center;top:381.36px;font-size:18px;color:#fff;font-weight:700;font-family:'Liberation Sans', sans-serif;">Ocorrência</div>
<div style="position:absolute;left:1054px;top:403px;width:1px;height:167px;background:#000"></div>
<div style="position:absolute;left:1194px;top:403px;width:1px;height:167px;background:#000"></div>
<div style="position:absolute;left:1054px;top:427px;width:141px;height:1px;background:#000"></div>
<div class="t" style="left:1034.5px;width:180px;text-align:center;top:408.86px;font-size:16px;color:#000;font-weight:400;font-family:'Liberation Sans', sans-serif;">Falta</div>
<div style="position:absolute;left:1054px;top:449px;width:141px;height:1px;background:#000"></div>
<div class="t" style="left:1034.5px;width:180px;text-align:center;top:431.86px;font-size:16px;color:#000;font-weight:400;font-family:'Liberation Sans', sans-serif;">Atraso</div>
<div style="position:absolute;left:1054px;top:473px;width:141px;height:1px;background:#000"></div>
<div class="t" style="left:1034.5px;width:180px;text-align:center;top:454.86px;font-size:16px;color:#000;font-weight:400;font-family:'Liberation Sans', sans-serif;">Saída Antecipada</div>
<div style="position:absolute;left:1054px;top:497px;width:141px;height:1px;background:#000"></div>
<div class="t" style="left:1034.5px;width:180px;text-align:center;top:478.86px;font-size:16px;color:#000;font-weight:400;font-family:'Liberation Sans', sans-serif;">Atitude disciplinar</div>
<div style="position:absolute;left:1054px;top:521px;width:141px;height:1px;background:#000"></div>
<div style="position:absolute;left:1054px;top:545px;width:141px;height:1px;background:#000"></div>
<div style="position:absolute;left:1054px;top:569px;width:141px;height:1px;background:#000"></div>
<div style="position:absolute;left:1212px;top:353px;width:681px;height:600px;overflow:hidden">
<div style="position:absolute;left:0px;top:0px;width:740px;height:51px;background:#000"></div>
<div class="t" style="left:-51.5px;width:200px;text-align:center;top:16.56px;font-size:18px;color:#fff;font-weight:700">Matricula</div>
<div class="t" style="left:152.5px;width:300px;text-align:center;top:16.56px;font-size:18px;color:#fff;font-weight:700">Nome do Funcionário</div>
<div class="t" style="left:459.0px;width:200px;text-align:center;top:16.56px;font-size:18px;color:#fff;font-weight:700">Genero</div>
<div class="t" style="left:573.0px;width:200px;text-align:center;top:5.96px;font-size:18px;color:#fff;font-weight:700">Data de</div>
<div class="t" style="left:573.0px;width:200px;text-align:center;top:28.36px;font-size:18px;color:#fff;font-weight:700">Nascimento</div>
<div style="position:absolute;left:0px;top:50px;width:1px;height:560px;background:#000"></div>
<div style="position:absolute;left:96px;top:50px;width:1px;height:560px;background:#000"></div>
<div style="position:absolute;left:508px;top:50px;width:1px;height:560px;background:#000"></div>
<div style="position:absolute;left:609px;top:50px;width:1px;height:560px;background:#000"></div>
<div style="position:absolute;left:0px;top:74px;width:740px;height:1px;background:#000"></div>
<div class="t" style="left:-51.5px;width:200px;text-align:center;top:55.86px;font-size:16px;color:#000;font-weight:400">1</div>
<div class="t" style="left:100px;top:55.43px;font-size:16.5px;color:#000;font-weight:400">Funcionario 1</div>
<div class="t" style="left:459.0px;width:200px;text-align:center;top:55.86px;font-size:16px;color:#000;font-weight:400">Masculino</div>
<div class="t" style="left:573.0px;width:200px;text-align:center;top:55.86px;font-size:16px;color:#000;font-weight:400">08/10/1990</div>
<div style="position:absolute;left:0px;top:96px;width:740px;height:1px;background:#000"></div>
<div class="t" style="left:-51.5px;width:200px;text-align:center;top:78.86px;font-size:16px;color:#000;font-weight:400">2</div>
<div class="t" style="left:100px;top:78.43px;font-size:16.5px;color:#000;font-weight:400">Funcionario 2</div>
<div class="t" style="left:459.0px;width:200px;text-align:center;top:78.86px;font-size:16px;color:#000;font-weight:400">Feminino</div>
<div class="t" style="left:573.0px;width:200px;text-align:center;top:78.86px;font-size:16px;color:#000;font-weight:400">02/11/1990</div>
<div style="position:absolute;left:0px;top:120px;width:740px;height:1px;background:#000"></div>
<div class="t" style="left:-51.5px;width:200px;text-align:center;top:101.86px;font-size:16px;color:#000;font-weight:400">3</div>
<div class="t" style="left:100px;top:101.43px;font-size:16.5px;color:#000;font-weight:400">Funcionario 3</div>
<div class="t" style="left:459.0px;width:200px;text-align:center;top:101.86px;font-size:16px;color:#000;font-weight:400">Feminino</div>
<div class="t" style="left:573.0px;width:200px;text-align:center;top:101.86px;font-size:16px;color:#000;font-weight:400">02/12/1990</div>
<div style="position:absolute;left:0px;top:144px;width:740px;height:1px;background:#000"></div>
<div class="t" style="left:-51.5px;width:200px;text-align:center;top:125.86px;font-size:16px;color:#000;font-weight:400">4</div>
<div class="t" style="left:100px;top:125.43px;font-size:16.5px;color:#000;font-weight:400">Funcionario 4</div>
<div class="t" style="left:459.0px;width:200px;text-align:center;top:125.86px;font-size:16px;color:#000;font-weight:400">Masculino</div>
<div class="t" style="left:573.0px;width:200px;text-align:center;top:125.86px;font-size:16px;color:#000;font-weight:400">21/01/1990</div>
<div style="position:absolute;left:0px;top:168px;width:740px;height:1px;background:#000"></div>
<div class="t" style="left:-51.5px;width:200px;text-align:center;top:149.86px;font-size:16px;color:#000;font-weight:400">5</div>
<div class="t" style="left:100px;top:149.43px;font-size:16.5px;color:#000;font-weight:400">Funcionario 5</div>
<div class="t" style="left:459.0px;width:200px;text-align:center;top:149.86px;font-size:16px;color:#000;font-weight:400">Masculino</div>
<div class="t" style="left:573.0px;width:200px;text-align:center;top:149.86px;font-size:16px;color:#000;font-weight:400">21/01/1990</div>
<div style="position:absolute;left:0px;top:192px;width:740px;height:1px;background:#000"></div>
<div class="t" style="left:-51.5px;width:200px;text-align:center;top:173.86px;font-size:16px;color:#000;font-weight:400">6</div>
<div class="t" style="left:100px;top:173.43px;font-size:16.5px;color:#000;font-weight:400">Funcionario 6</div>
<div class="t" style="left:459.0px;width:200px;text-align:center;top:173.86px;font-size:16px;color:#000;font-weight:400">Feminino</div>
<div class="t" style="left:573.0px;width:200px;text-align:center;top:173.86px;font-size:16px;color:#000;font-weight:400">21/01/1990</div>
<div style="position:absolute;left:0px;top:216px;width:740px;height:1px;background:#000"></div>
<div class="t" style="left:-51.5px;width:200px;text-align:center;top:197.86px;font-size:16px;color:#000;font-weight:400">7</div>
<div class="t" style="left:100px;top:197.43px;font-size:16.5px;color:#000;font-weight:400">Funcionario 7</div>
<div class="t" style="left:459.0px;width:200px;text-align:center;top:197.86px;font-size:16px;color:#000;font-weight:400">Feminino</div>
<div class="t" style="left:573.0px;width:200px;text-align:center;top:197.86px;font-size:16px;color:#000;font-weight:400">21/01/1990</div>
<div style="position:absolute;left:0px;top:238px;width:740px;height:1px;background:#000"></div>
<div class="t" style="left:-51.5px;width:200px;text-align:center;top:220.86px;font-size:16px;color:#000;font-weight:400">8</div>
<div class="t" style="left:100px;top:220.43px;font-size:16.5px;color:#000;font-weight:400">Funcionario 8</div>
<div class="t" style="left:459.0px;width:200px;text-align:center;top:220.86px;font-size:16px;color:#000;font-weight:400">Masculino</div>
<div class="t" style="left:573.0px;width:200px;text-align:center;top:220.86px;font-size:16px;color:#000;font-weight:400">21/01/1990</div>
<div style="position:absolute;left:0px;top:260px;width:740px;height:1px;background:#000"></div>
<div class="t" style="left:-51.5px;width:200px;text-align:center;top:242.86px;font-size:16px;color:#000;font-weight:400">9</div>
<div class="t" style="left:100px;top:242.43px;font-size:16.5px;color:#000;font-weight:400">Funcionario 9</div>
<div class="t" style="left:459.0px;width:200px;text-align:center;top:242.86px;font-size:16px;color:#000;font-weight:400">Masculino</div>
<div class="t" style="left:573.0px;width:200px;text-align:center;top:242.86px;font-size:16px;color:#000;font-weight:400">21/01/1990</div>
<div style="position:absolute;left:0px;top:282px;width:740px;height:1px;background:#000"></div>
<div class="t" style="left:-51.5px;width:200px;text-align:center;top:264.86px;font-size:16px;color:#000;font-weight:400">10</div>
<div class="t" style="left:100px;top:264.43px;font-size:16.5px;color:#000;font-weight:400">Funcionario 10</div>
<div class="t" style="left:459.0px;width:200px;text-align:center;top:264.86px;font-size:16px;color:#000;font-weight:400">Masculino</div>
<div class="t" style="left:573.0px;width:200px;text-align:center;top:264.86px;font-size:16px;color:#000;font-weight:400">21/01/1990</div>
<div style="position:absolute;left:0px;top:304px;width:740px;height:1px;background:#000"></div>
<div class="t" style="left:-51.5px;width:200px;text-align:center;top:286.86px;font-size:16px;color:#000;font-weight:400">11</div>
<div class="t" style="left:100px;top:286.43px;font-size:16.5px;color:#000;font-weight:400">Funcionario 11</div>
<div class="t" style="left:459.0px;width:200px;text-align:center;top:286.86px;font-size:16px;color:#000;font-weight:400">Masculino</div>
<div class="t" style="left:573.0px;width:200px;text-align:center;top:286.86px;font-size:16px;color:#000;font-weight:400">21/01/1990</div>
<div style="position:absolute;left:0px;top:326px;width:740px;height:1px;background:#000"></div>
<div class="t" style="left:-51.5px;width:200px;text-align:center;top:308.86px;font-size:16px;color:#000;font-weight:400">12</div>
<div class="t" style="left:100px;top:308.43px;font-size:16.5px;color:#000;font-weight:400">Funcionario 12</div>
<div class="t" style="left:459.0px;width:200px;text-align:center;top:308.86px;font-size:16px;color:#000;font-weight:400">Feminino</div>
<div class="t" style="left:573.0px;width:200px;text-align:center;top:308.86px;font-size:16px;color:#000;font-weight:400">21/01/1990</div>
<div style="position:absolute;left:0px;top:348px;width:740px;height:1px;background:#000"></div>
<div class="t" style="left:-51.5px;width:200px;text-align:center;top:330.86px;font-size:16px;color:#000;font-weight:400">13</div>
<div class="t" style="left:100px;top:330.43px;font-size:16.5px;color:#000;font-weight:400">Funcionario 13</div>
<div class="t" style="left:459.0px;width:200px;text-align:center;top:330.86px;font-size:16px;color:#000;font-weight:400">Feminino</div>
<div class="t" style="left:573.0px;width:200px;text-align:center;top:330.86px;font-size:16px;color:#000;font-weight:400">26/08/1990</div>
<div style="position:absolute;left:0px;top:370px;width:740px;height:1px;background:#000"></div>
<div class="t" style="left:-51.5px;width:200px;text-align:center;top:352.86px;font-size:16px;color:#000;font-weight:400">14</div>
<div class="t" style="left:100px;top:352.43px;font-size:16.5px;color:#000;font-weight:400">Funcionario 14</div>
<div class="t" style="left:459.0px;width:200px;text-align:center;top:352.86px;font-size:16px;color:#000;font-weight:400">Masculino</div>
<div class="t" style="left:573.0px;width:200px;text-align:center;top:352.86px;font-size:16px;color:#000;font-weight:400">26/08/1990</div>
<div style="position:absolute;left:0px;top:392px;width:740px;height:1px;background:#000"></div>
<div class="t" style="left:-51.5px;width:200px;text-align:center;top:374.86px;font-size:16px;color:#000;font-weight:400">15</div>
<div class="t" style="left:100px;top:374.43px;font-size:16.5px;color:#000;font-weight:400">Funcionario 15</div>
<div class="t" style="left:459.0px;width:200px;text-align:center;top:374.86px;font-size:16px;color:#000;font-weight:400">Masculino</div>
<div class="t" style="left:573.0px;width:200px;text-align:center;top:374.86px;font-size:16px;color:#000;font-weight:400">23/03/1990</div>
<div style="position:absolute;left:0px;top:414px;width:740px;height:1px;background:#000"></div>
<div class="t" style="left:-51.5px;width:200px;text-align:center;top:396.86px;font-size:16px;color:#000;font-weight:400">16</div>
<div class="t" style="left:100px;top:396.43px;font-size:16.5px;color:#000;font-weight:400">Funcionario 16</div>
<div class="t" style="left:459.0px;width:200px;text-align:center;top:396.86px;font-size:16px;color:#000;font-weight:400">Masculino</div>
<div class="t" style="left:573.0px;width:200px;text-align:center;top:396.86px;font-size:16px;color:#000;font-weight:400">23/03/1990</div>
<div style="position:absolute;left:0px;top:436px;width:740px;height:1px;background:#000"></div>
<div class="t" style="left:-51.5px;width:200px;text-align:center;top:418.86px;font-size:16px;color:#000;font-weight:400">17</div>
<div class="t" style="left:100px;top:418.43px;font-size:16.5px;color:#000;font-weight:400">Funcionario 17</div>
<div class="t" style="left:459.0px;width:200px;text-align:center;top:418.86px;font-size:16px;color:#000;font-weight:400">Masculino</div>
<div class="t" style="left:573.0px;width:200px;text-align:center;top:418.86px;font-size:16px;color:#000;font-weight:400">23/03/1990</div>
<div style="position:absolute;left:0px;top:458px;width:740px;height:1px;background:#000"></div>
<div class="t" style="left:-51.5px;width:200px;text-align:center;top:440.86px;font-size:16px;color:#000;font-weight:400">18</div>
<div class="t" style="left:100px;top:440.43px;font-size:16.5px;color:#000;font-weight:400">Funcionario 18</div>
<div class="t" style="left:459.0px;width:200px;text-align:center;top:440.86px;font-size:16px;color:#000;font-weight:400">Masculino</div>
<div class="t" style="left:573.0px;width:200px;text-align:center;top:440.86px;font-size:16px;color:#000;font-weight:400">23/03/1990</div>
<div style="position:absolute;left:0px;top:480px;width:740px;height:1px;background:#000"></div>
<div class="t" style="left:-51.5px;width:200px;text-align:center;top:462.86px;font-size:16px;color:#000;font-weight:400">19</div>
<div class="t" style="left:100px;top:462.43px;font-size:16.5px;color:#000;font-weight:400">Funcionario 19</div>
<div class="t" style="left:459.0px;width:200px;text-align:center;top:462.86px;font-size:16px;color:#000;font-weight:400">Feminino</div>
<div class="t" style="left:573.0px;width:200px;text-align:center;top:462.86px;font-size:16px;color:#000;font-weight:400">23/03/1990</div>
<div style="position:absolute;left:0px;top:502px;width:740px;height:1px;background:#000"></div>
<div class="t" style="left:-51.5px;width:200px;text-align:center;top:484.86px;font-size:16px;color:#000;font-weight:400">20</div>
<div class="t" style="left:100px;top:484.43px;font-size:16.5px;color:#000;font-weight:400">Funcionario 20</div>
<div class="t" style="left:459.0px;width:200px;text-align:center;top:484.86px;font-size:16px;color:#000;font-weight:400">Feminino</div>
<div class="t" style="left:573.0px;width:200px;text-align:center;top:484.86px;font-size:16px;color:#000;font-weight:400">23/03/1990</div>
<div style="position:absolute;left:0px;top:524px;width:740px;height:1px;background:#000"></div>
<div class="t" style="left:-51.5px;width:200px;text-align:center;top:506.86px;font-size:16px;color:#000;font-weight:400">21</div>
<div class="t" style="left:100px;top:506.43px;font-size:16.5px;color:#000;font-weight:400">Funcionario 21</div>
<div class="t" style="left:459.0px;width:200px;text-align:center;top:506.86px;font-size:16px;color:#000;font-weight:400">Masculino</div>
<div class="t" style="left:573.0px;width:200px;text-align:center;top:506.86px;font-size:16px;color:#000;font-weight:400">23/03/1990</div>
<div style="position:absolute;left:0px;top:546px;width:740px;height:1px;background:#000"></div>
<div class="t" style="left:-51.5px;width:200px;text-align:center;top:528.86px;font-size:16px;color:#000;font-weight:400">22</div>
<div class="t" style="left:100px;top:528.43px;font-size:16.5px;color:#000;font-weight:400">Funcionario 22</div>
<div class="t" style="left:459.0px;width:200px;text-align:center;top:528.86px;font-size:16px;color:#000;font-weight:400">Masculino</div>
<div class="t" style="left:573.0px;width:200px;text-align:center;top:528.86px;font-size:16px;color:#000;font-weight:400">23/03/1990</div>
<div style="position:absolute;left:0px;top:568px;width:740px;height:1px;background:#000"></div>
<div class="t" style="left:-51.5px;width:200px;text-align:center;top:550.86px;font-size:16px;color:#000;font-weight:400">23</div>
<div class="t" style="left:100px;top:550.43px;font-size:16.5px;color:#000;font-weight:400">Funcionario 23</div>
<div class="t" style="left:459.0px;width:200px;text-align:center;top:550.86px;font-size:16px;color:#000;font-weight:400">Feminino</div>
<div class="t" style="left:573.0px;width:200px;text-align:center;top:550.86px;font-size:16px;color:#000;font-weight:400">23/03/1990</div>
<div style="position:absolute;left:0px;top:590px;width:740px;height:1px;background:#000"></div>
<div class="t" style="left:-51.5px;width:200px;text-align:center;top:572.86px;font-size:16px;color:#000;font-weight:400">24</div>
<div class="t" style="left:100px;top:572.43px;font-size:16.5px;color:#000;font-weight:400">Funcionario 24</div>
<div class="t" style="left:459.0px;width:200px;text-align:center;top:572.86px;font-size:16px;color:#000;font-weight:400">Feminino</div>
<div class="t" style="left:573.0px;width:200px;text-align:center;top:572.86px;font-size:16px;color:#000;font-weight:400">23/03/1990</div>
<div style="position:absolute;left:0px;top:612px;width:740px;height:1px;background:#000"></div>
<div class="t" style="left:-51.5px;width:200px;text-align:center;top:594.86px;font-size:16px;color:#000;font-weight:400">25</div>
<div class="t" style="left:100px;top:594.43px;font-size:16.5px;color:#000;font-weight:400">Funcionario 25</div>
<div class="t" style="left:459.0px;width:200px;text-align:center;top:594.86px;font-size:16px;color:#000;font-weight:400">Masculino</div>
<div class="t" style="left:573.0px;width:200px;text-align:center;top:594.86px;font-size:16px;color:#000;font-weight:400">15/05/1990</div>
</div>
<div style="position:absolute;left:1895px;top:270px;width:25px;height:683px;background:transparent"></div>
<div style="position:absolute;left:1897px;top:270px;width:21px;height:683px;background:#f3f3f3;border-radius:10px"></div>
<svg style="position:absolute;left:1902px;top:276px;" width="12" height="10" viewBox="0 0 12 10"><path d="M6 0.5 L11.5 9 H0.5 Z" fill="#707070" stroke="#707070" stroke-linejoin="round" stroke-width="1"/></svg>
<div style="position:absolute;left:1902px;top:291px;width:11px;height:410px;background:#767676;border-radius:6px"></div>
<svg style="position:absolute;left:1902px;top:940px;" width="12" height="10" viewBox="0 0 12 10"><path d="M6 9.5 L11.5 1 H0.5 Z" fill="#707070" stroke="#707070" stroke-linejoin="round" stroke-width="1"/></svg>
<div style="position:absolute;left:0px;top:953px;width:1920px;height:6px;background:#fff"></div>
<div style="position:absolute;left:0px;top:959px;width:1920px;height:34px;background:#e6e9e8"></div>
<div style="position:absolute;left:0px;top:953px;width:141px;height:40px;background:#e2e8e5;border-top-right-radius:6px"></div>
<div style="position:absolute;left:141px;top:945px;width:100px;height:43px;background:#fff;border-bottom-left-radius:6px;border-bottom-right-radius:6px"></div>
<div style="position:absolute;left:241px;top:953px;width:1679px;height:40px;background:linear-gradient(to right,#e7e8e8,#e6e9e8 50%,#e4e9e7);border-top-left-radius:6px"></div>
<svg style="position:absolute;left:31px;top:966px;" width="10" height="12" viewBox="0 0 10 12"><path d="M8.5 0.5 L1.5 6 L8.5 11.5" fill="none" stroke="#8a8a8a" stroke-width="1.2"/></svg>
<svg style="position:absolute;left:72px;top:966px;" width="10" height="12" viewBox="0 0 10 12"><path d="M1.5 0.5 L8.5 6 L1.5 11.5" fill="none" stroke="#8a8a8a" stroke-width="1.2"/></svg>
<div class="t" style="left:151px;top:961.53px;font-size:16.5px;color:#242424;font-weight:700;font-family:'Liberation Sans', sans-serif;">Cadastros</div>
<div style="position:absolute;left:151px;top:983px;width:80px;height:2.5px;background:#107c41;border-radius:1px"></div>
<div style="position:absolute;left:246px;top:961px;width:1px;height:24px;background:#c9c9c9"></div>
<div style="position:absolute;left:413.5px;top:961px;width:1px;height:24px;background:#c9c9c9"></div>
<div style="position:absolute;left:541.5px;top:961px;width:1px;height:24px;background:#c9c9c9"></div>
<div style="position:absolute;left:614.5px;top:961px;width:1px;height:24px;background:#c9c9c9"></div>
<div class="t" style="left:268px;top:966.43px;font-size:16.5px;color:#242424;font-weight:400;font-family:'Liberation Sans', sans-serif;">Jornada Prevista</div>
<div class="t" style="left:433.3px;top:966.22px;font-size:16.75px;color:#242424;font-weight:400;font-family:'Liberation Sans', sans-serif;">Ocorrências</div>
<div class="t" style="left:558.3px;top:965.59px;font-size:17.5px;color:#242424;font-weight:400;font-family:'Liberation Sans', sans-serif;">Meta</div>
<svg style="position:absolute;left:667px;top:965px;" width="15" height="15" viewBox="0 0 15 15"><path d="M7.5 0 V15 M0 7.5 H15" stroke="#242424" stroke-width="1.3"/></svg>
<div style="position:absolute;left:1154.5px;top:967px;width:3px;height:3px;background:#3b3b3b"></div>
<div style="position:absolute;left:1154.5px;top:972px;width:3px;height:3px;background:#3b3b3b"></div>
<div style="position:absolute;left:1154.5px;top:977px;width:3px;height:3px;background:#3b3b3b"></div>
<div style="position:absolute;left:1176px;top:962px;width:721px;height:20.5px;background:#f3f3f3;border-radius:10px"></div>
<svg style="position:absolute;left:1182px;top:967px;" width="9" height="11" viewBox="0 0 9 11"><path d="M8.5 0.5 V10.5 L1 5.5 Z" fill="#707070" stroke="#707070" stroke-width="0.8" stroke-linejoin="round"/></svg>
<div style="position:absolute;left:1197px;top:967px;width:548px;height:11px;background:#737373;border-radius:5.5px"></div>
<svg style="position:absolute;left:1882px;top:967px;" width="9" height="11" viewBox="0 0 9 11"><path d="M0.5 0.5 V10.5 L8 5.5 Z" fill="#707070" stroke="#707070" stroke-width="0.8" stroke-linejoin="round"/></svg>
<div style="position:absolute;left:0px;top:993px;width:1920px;height:27px;background:#f3f3f3"></div>
<div class="t" style="left:14.2px;top:1000.70px;font-size:13px;color:#242424;font-weight:400;font-family:'Liberation Sans', sans-serif;">Pronto</div>
<svg style="position:absolute;left:79px;top:999px;" width="19" height="17" viewBox="0 0 19 17"><path d="M6.5 15.6 H0.8 V0.8 H17.5 V5.5" fill="none" stroke="#333" stroke-width="1.5"/><path d="M0.8 3.4 H17.5" stroke="#333" stroke-width="1.3"/><path d="M3.2 6.2 H6.4 M3.2 8.7 H4.8 M3.2 11.2 H4.8" stroke="#333" stroke-width="1.2"/><circle cx="12" cy="11" r="4.6" fill="#f3f3f3" stroke="#222" stroke-width="1.4"/><circle cx="12" cy="11" r="1.9" fill="#222"/></svg>
<svg style="position:absolute;left:119px;top:998px;" width="20" height="19" viewBox="0 0 20 19"><circle cx="7.7" cy="2.9" r="2.2" fill="none" stroke="#222" stroke-width="1.3"/><path d="M5.2 4.2 C3.5 3.2 0.8 3 0.8 4.8 C0.8 6.2 2.6 6.8 4.8 7.6 C4.6 10 4.3 12 3.6 13.6 C2.9 15.2 2.5 17 4.9 16.8 M10.2 4.2 C12 3.2 14.6 3 14.6 4.8 C14.6 6.2 12.6 6.9 11 7.6 V10.5" fill="none" stroke="#222" stroke-width="1.3" stroke-linecap="round" stroke-linejoin="round"/><path d="M8.6 13.3 L12.3 17 L18.4 10.7" fill="none" stroke="#222" stroke-width="1.3"/></svg>
<div class="t" style="left:141.3px;top:1000.53px;font-size:13.2px;color:#242424;font-weight:400;font-family:'Liberation Sans', sans-serif;">Acessibilidade: tudo certo</div>
<svg style="position:absolute;left:1381px;top:999px;" width="19" height="18" viewBox="0 0 19 18"><path d="M6.2 11.2 H0.8 V0.8 H17.3 V6.5" fill="none" stroke="#333" stroke-width="1.5"/><path d="M12.20 5.70 L14.15 7.62 L16.79 8.35 L16.10 11.00 L16.79 13.65 L14.15 14.38 L12.20 16.30 L10.25 14.38 L7.61 13.65 L8.30 11.00 L7.61 8.35 L10.25 7.62 Z" fill="#f3f3f3" stroke="#222" stroke-width="1.3" stroke-linejoin="round"/><circle cx="12.2" cy="11" r="1.6" fill="#222"/></svg>
<div class="t" style="left:1402.3px;top:1000.70px;font-size:13px;color:#242424;font-weight:400;font-family:'Liberation Sans', sans-serif;">Exibir Configurações</div>
<div style="position:absolute;left:1547px;top:993px;width:50px;height:27px;background:#dedede"></div>
<svg style="position:absolute;left:1563px;top:998px;" width="17" height="17" viewBox="0 0 17 17"><rect x="0.8" y="0.8" width="15.4" height="15.4" fill="none" stroke="#3b3b3b" stroke-width="1.5"/><path d="M6 0.8 V16.2 M11 0.8 V16.2 M0.8 6 H16.2 M0.8 11 H16.2" stroke="#3b3b3b" stroke-width="1.5"/></svg>
<svg style="position:absolute;left:1613px;top:998px;" width="18" height="17" viewBox="0 0 18 17"><rect x="0.8" y="0.8" width="16.4" height="15.4" fill="none" stroke="#3b3b3b" stroke-width="1.4"/><rect x="3.5" y="3.5" width="11" height="10" fill="none" stroke="#3b3b3b" stroke-width="1.1"/><path d="M5.5 6.5 H12.5 M5.5 8.7 H12.5 M5.5 11 H12.5" stroke="#3b3b3b" stroke-width="1"/></svg>
<svg style="position:absolute;left:1663px;top:998px;" width="18" height="17" viewBox="0 0 18 17"><path d="M0.8 0.8 H17.2 V16.2 H0.8 Z M0.8 10 H9 V0.8 M5 0.8 V10" fill="none" stroke="#3b3b3b" stroke-width="1.4"/></svg>
<div style="position:absolute;left:1704px;top:1006px;width:9.5px;height:1.2px;background:#3b3b3b"></div>
<div style="position:absolute;left:1720px;top:1007px;width:125px;height:1px;background:#6b6b6b"></div>
<div style="position:absolute;left:1780px;top:1000px;width:6px;height:14px;background:#6b6b6b;border-radius:1px"></div>
<svg style="position:absolute;left:1851px;top:1002px;" width="10" height="10" viewBox="0 0 10 10"><path d="M5 0 V10 M0 5 H10" stroke="#3b3b3b" stroke-width="1.2"/></svg>
<div class="t" style="left:1878.2px;top:1001.85px;font-size:11.75px;color:#3b3b3b;font-weight:400;font-family:'Liberation Sans', sans-serif;">100%</div>
</body></html>
